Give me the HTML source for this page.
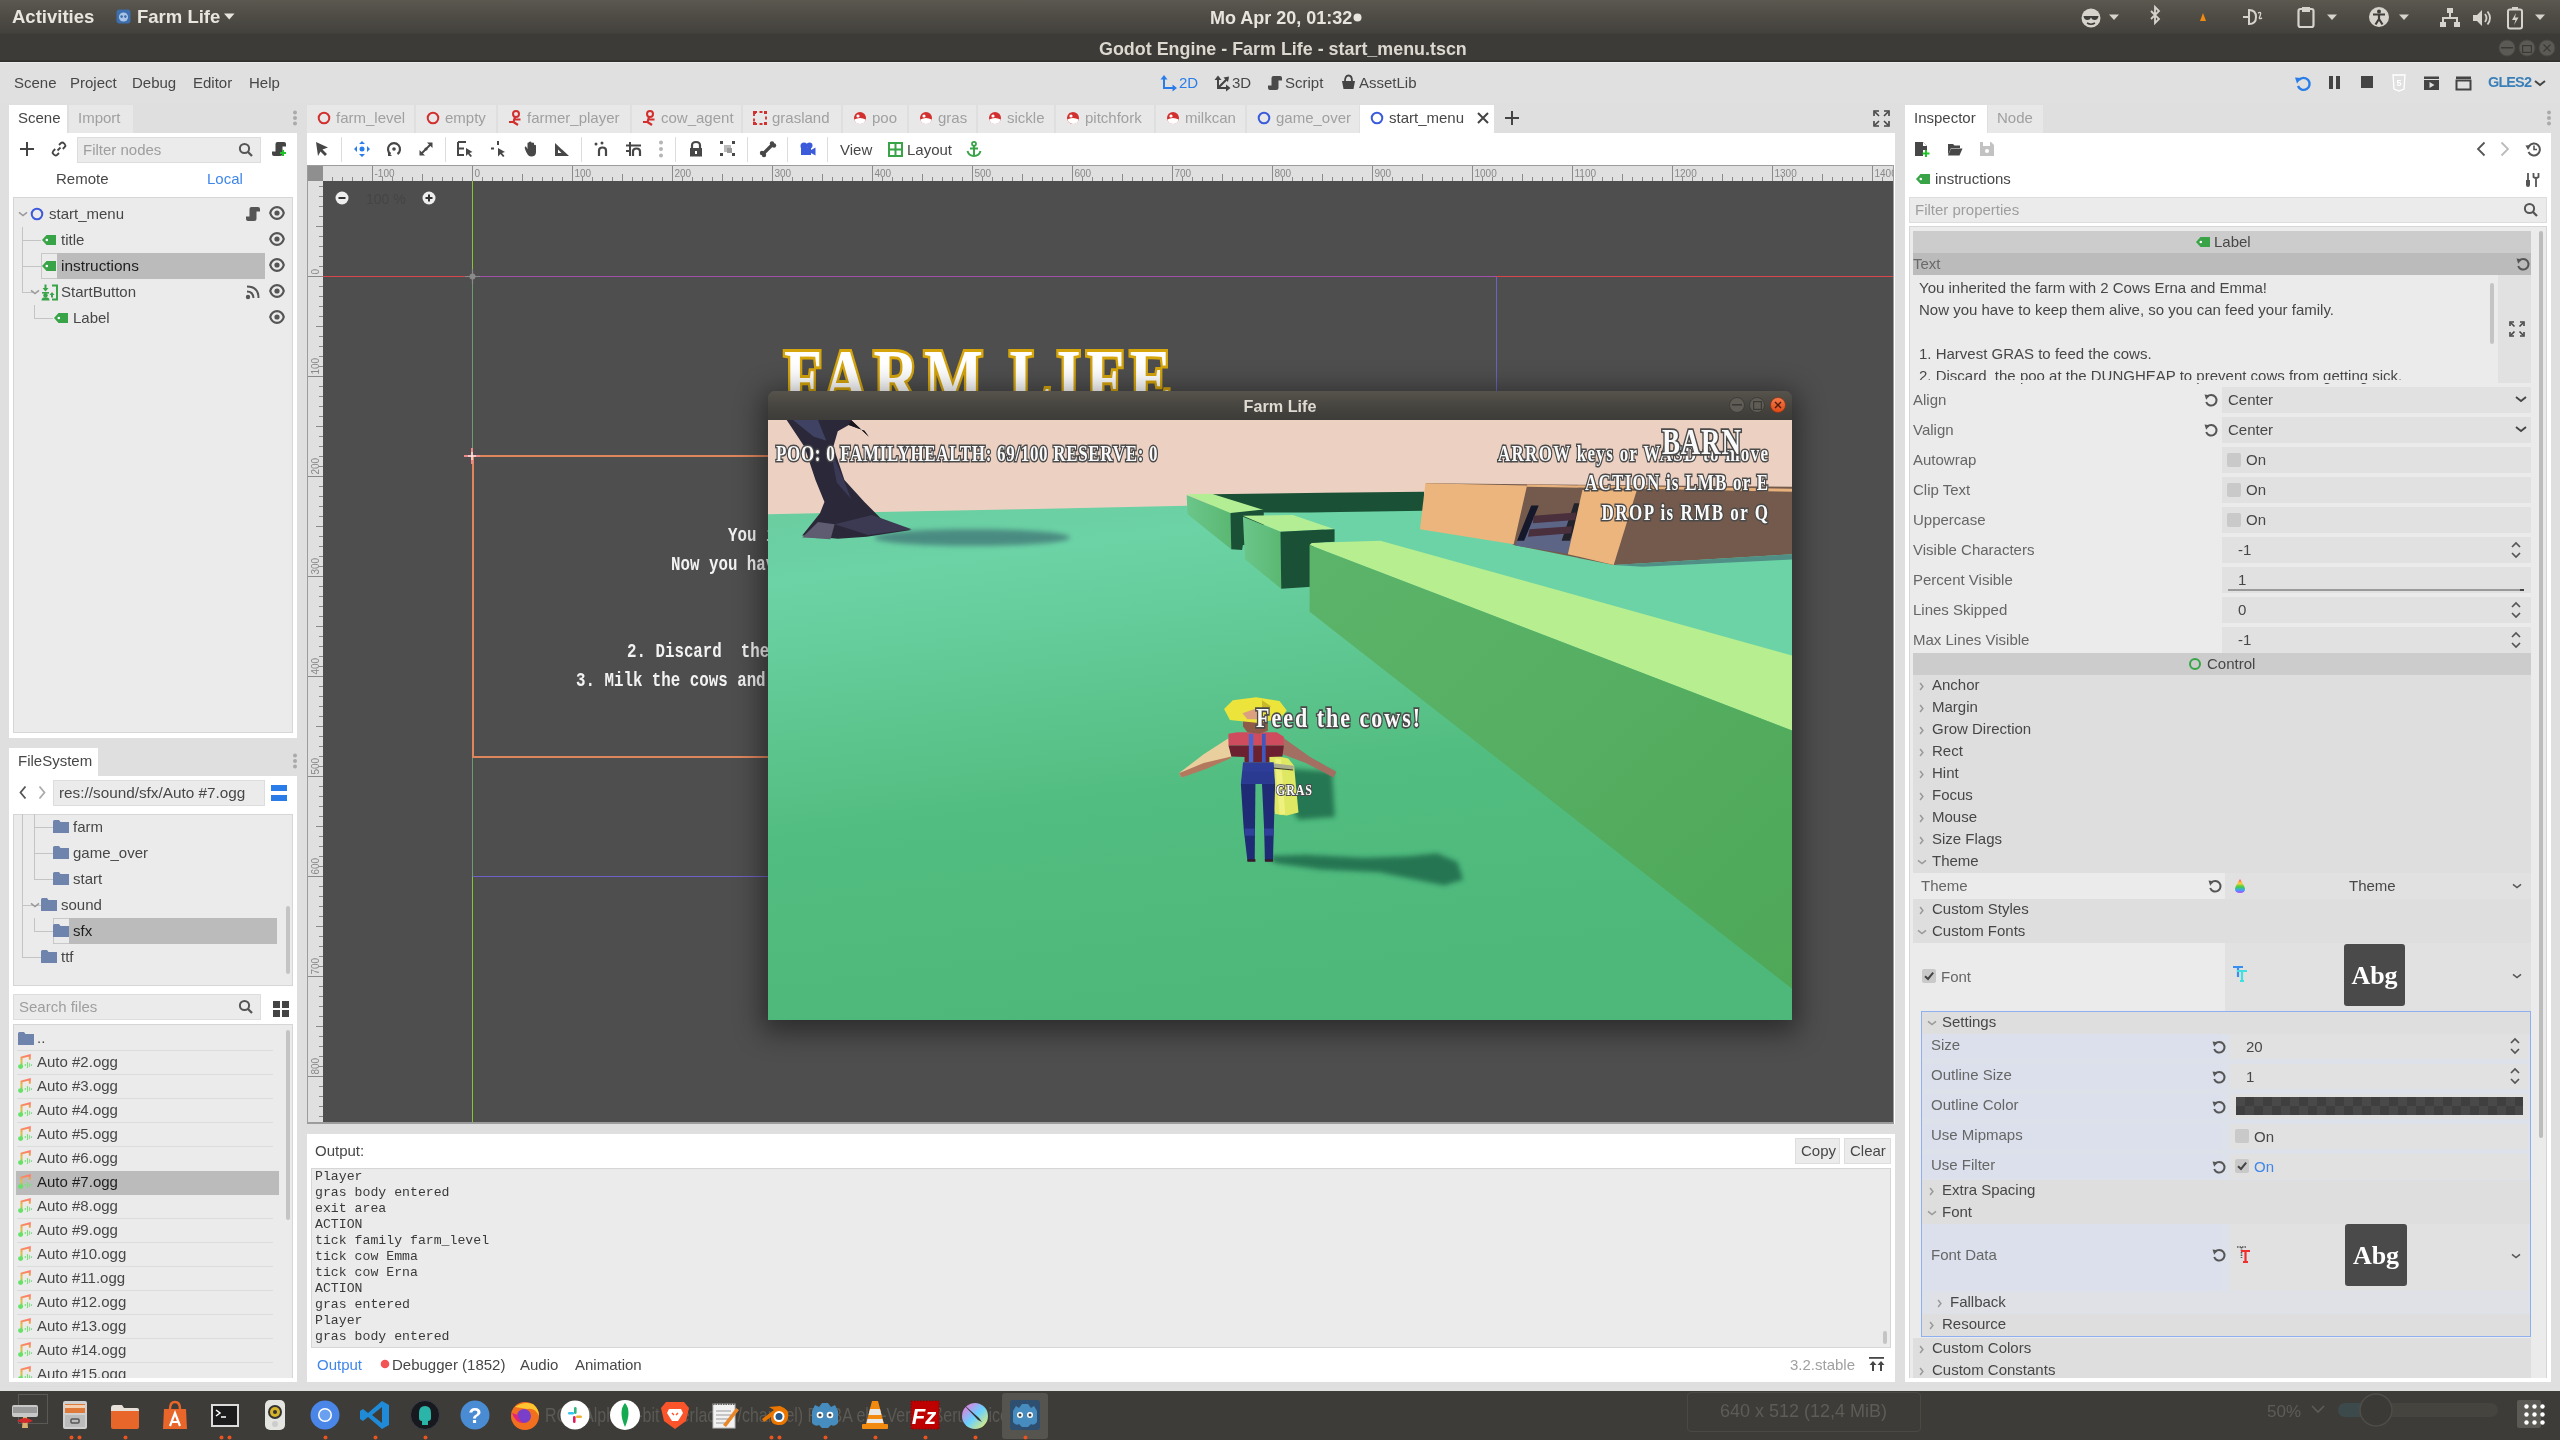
<!DOCTYPE html>
<html><head><meta charset="utf-8">
<style>
*{box-sizing:border-box;margin:0;padding:0}
html,body{width:2560px;height:1440px;overflow:hidden;background:#dfdfdf;font-family:"Liberation Sans",sans-serif;color:#444}
.a{position:absolute}
.t{position:absolute;white-space:pre;line-height:1}
svg{position:absolute;overflow:visible}
</style></head><body>
<div style="position:absolute;left:0;top:0;width:2560px;height:1440px;will-change:transform">

<div class="a" style="left:0;top:0;width:2560px;height:62px;background:linear-gradient(#5b5850 0px,#4f4c46 16px,#44423d 33px,#3c3b37 34px,#3c3b37 60px,#2f2e2b 61px,#2f2e2b 62px)"></div>
<div class="t" style="left:12px;top:8.1px;font-size:18.5px;color:#e8e5df;font-weight:700;">Activities</div>
<svg style="left:116px;top:9px;" width="15" height="15" viewBox="0 0 15 15"><rect x="0.5" y="0.5" width="14" height="14" rx="3" fill="#3d6fae"/><circle cx="7.5" cy="8" r="4.6" fill="#a9c4e6"/><circle cx="5.6" cy="7.6" r="1.3" fill="#3d6fae"/><circle cx="9.4" cy="7.6" r="1.3" fill="#3d6fae"/></svg>
<div class="t" style="left:137px;top:8.1px;font-size:18.5px;color:#e8e5df;font-weight:700;">Farm Life</div>
<svg style="left:224px;top:13px;" width="12" height="8" viewBox="0 0 12 8"><path d="M0 0.5h10.5l-5.25 6z" fill="#e8e5df"/></svg>
<div class="t" style="left:1210px;top:8.6px;font-size:18px;color:#e8e5df;font-weight:700;">Mo Apr 20, 01:32</div>
<svg style="left:1353px;top:13px;" width="9" height="9" viewBox="0 0 9 9"><circle cx="4.5" cy="4.5" r="4" fill="#e8e5df"/></svg>
<div class="t" style="left:1099px;top:40.6px;font-size:17.9px;color:#dcd8d0;font-weight:700;">Godot Engine - Farm Life - start_menu.tscn</div>
<svg style="left:2080px;top:7px;" width="22" height="22" viewBox="0 0 22 22"><circle cx="11" cy="11" r="9.5" fill="#d6d3cc"/><path d="M3.5 9 H18.5 Q18 13 14.5 13 Q12 13 11 10.5 Q10 13 7.5 13 Q4 13 3.5 9Z" fill="#3f3d39"/><path d="M7 16 Q11 18.5 15 16" stroke="#3f3d39" stroke-width="1.5" fill="none"/></svg>
<svg style="left:2109px;top:14px;" width="12" height="8" viewBox="0 0 12 8"><path d="M0 0.5h10l-5 5.5z" fill="#d6d3cc"/></svg>
<svg style="left:2146px;top:6px;" width="18" height="22" viewBox="0 0 18 22"><path d="M5 5 L13 13 L9 17 V1 L13 5 L5 13" fill="none" stroke="#d6d3cc" stroke-width="1.8"/></svg>
<svg style="left:2199px;top:13px;" width="8" height="8" viewBox="0 0 8 8"><path d="M4 0 L7 8 H1Z" fill="#f08a10"/></svg>
<svg style="left:2241px;top:7px;" width="22" height="20" viewBox="0 0 22 20"><path d="M2 10h5M8 3 Q15 3 15 10 Q15 17 8 17Z" fill="none" stroke="#d6d3cc" stroke-width="2"/><path d="M17 6 Q21 4 19 9 Q17 13 21 11" fill="none" stroke="#d6d3cc" stroke-width="1.4"/></svg>
<svg style="left:2297px;top:6px;" width="18" height="22" viewBox="0 0 18 22"><rect x="1.5" y="3" width="15" height="18" rx="2" fill="none" stroke="#d6d3cc" stroke-width="2.2"/><rect x="5" y="1" width="8" height="5" fill="#d6d3cc"/></svg>
<svg style="left:2327px;top:14px;" width="12" height="8" viewBox="0 0 12 8"><path d="M0 0.5h10l-5 5.5z" fill="#d6d3cc"/></svg>
<svg style="left:2368px;top:6px;" width="22" height="22" viewBox="0 0 22 22"><circle cx="11" cy="11" r="10" fill="#d6d3cc"/><circle cx="11" cy="5.5" r="2" fill="#3f3d39"/><path d="M5 8.5 H17 M11 8.5 V13 L7.5 18.5 M11 13 L14.5 18.5" stroke="#3f3d39" stroke-width="2.2" fill="none"/></svg>
<svg style="left:2399px;top:14px;" width="12" height="8" viewBox="0 0 12 8"><path d="M0 0.5h10l-5 5.5z" fill="#d6d3cc"/></svg>
<svg style="left:2440px;top:7px;" width="20" height="21" viewBox="0 0 20 21"><rect x="7" y="1" width="6" height="5" fill="#d6d3cc"/><rect x="0" y="15" width="6" height="5" fill="#d6d3cc"/><rect x="14" y="15" width="6" height="5" fill="#d6d3cc"/><path d="M10 6v5M3 15v-4h14v4" fill="none" stroke="#d6d3cc" stroke-width="2"/></svg>
<svg style="left:2472px;top:8px;" width="22" height="20" viewBox="0 0 22 20"><path d="M1 7h4l5-5v16l-5-5H1Z" fill="#d6d3cc"/><path d="M13 6 Q16 10 13 14M15.5 3.5 Q20.5 10 15.5 16.5" fill="none" stroke="#d6d3cc" stroke-width="1.8"/></svg>
<svg style="left:2506px;top:6px;" width="18" height="23" viewBox="0 0 18 23"><rect x="2" y="3.5" width="14" height="19" rx="2" fill="none" stroke="#d6d3cc" stroke-width="2"/><rect x="6" y="1" width="6" height="3" fill="#d6d3cc"/><path d="M10 7 L6 14 H9.5 L8 19 L12.5 11.5 H9Z" fill="#d6d3cc"/></svg>
<svg style="left:2535px;top:14px;" width="12" height="8" viewBox="0 0 12 8"><path d="M0 0.5h10l-5 5.5z" fill="#d6d3cc"/></svg>
<svg style="left:2498px;top:39px;" width="18" height="18" viewBox="0 0 18 18"><circle cx="9" cy="9" r="8" fill="#5c5a55" stroke="#4a4843" stroke-width="1"/></svg>
<svg style="left:2518px;top:39px;" width="18" height="18" viewBox="0 0 18 18"><circle cx="9" cy="9" r="8" fill="#5c5a55" stroke="#4a4843" stroke-width="1"/></svg>
<svg style="left:2538px;top:39px;" width="18" height="18" viewBox="0 0 18 18"><circle cx="9" cy="9" r="8" fill="#5c5a55" stroke="#4a4843" stroke-width="1"/></svg>
<svg style="left:2501px;top:47px;" width="12" height="3" viewBox="0 0 12 3"><rect x="0" y="0" width="12" height="1.5" fill="#3a3935"/></svg>
<svg style="left:2522px;top:44.5px;" width="10" height="8" viewBox="0 0 10 8"><rect x="0.6" y="0.6" width="8.8" height="6.8" fill="none" stroke="#3a3935" stroke-width="1.2"/></svg>
<svg style="left:2543px;top:44px;" width="8" height="8" viewBox="0 0 8 8"><path d="M0.5 0.5 L7.5 7.5 M7.5 0.5 L0.5 7.5" stroke="#3a3935" stroke-width="1.1"/></svg>
<div class="a" style="left:0px;top:62px;width:2560px;height:41px;background:#e0e0e0;"></div>
<div class="a" style="left:0px;top:62px;width:2560px;height:1px;background:#ebebeb;"></div>
<div class="t" style="left:14px;top:74.6px;font-size:15px;color:#474747;">Scene</div>
<div class="t" style="left:70px;top:74.6px;font-size:15px;color:#474747;">Project</div>
<div class="t" style="left:132px;top:74.6px;font-size:15px;color:#474747;">Debug</div>
<div class="t" style="left:193px;top:74.6px;font-size:15px;color:#474747;">Editor</div>
<div class="t" style="left:249px;top:74.6px;font-size:15px;color:#474747;">Help</div>
<svg style="left:1160px;top:74px;" width="18" height="18" viewBox="0 0 18 18"><path d="M4 3 V14 H15" fill="none" stroke="#2a7de8" stroke-width="2"/><path d="M0.5 5.5 L4 1 L7.5 5.5Z M12.5 10.5 L17 14 L12.5 17.5Z" fill="#2a7de8"/></svg>
<div class="t" style="left:1179px;top:74.6px;font-size:15px;color:#2a7de8;">2D</div>
<svg style="left:1214px;top:74px;" width="18" height="18" viewBox="0 0 18 18"><path d="M4 4 V14 H14 M4 14 L14 4" fill="none" stroke="#444" stroke-width="2"/><path d="M0.5 6 L4 1.5 L7.5 6Z M12 10.5 L16.5 14 L12 17.5Z M9.5 3.5 L15 2.5 L14 8Z" fill="#444"/></svg>
<div class="t" style="left:1232px;top:74.6px;font-size:15px;color:#474747;">3D</div>
<svg style="left:1267px;top:75px;" width="16" height="16" viewBox="0 0 16 16"><path d="M6.5 1 H13 Q15 1 15 3 V5.5 H11.5 V12.5 Q11.5 15 9 15 H3 Q1 15 1 13 V10.5 H4.5 V3 Q4.5 1 6.5 1Z" fill="#4a4a4a"/></svg>
<div class="t" style="left:1285px;top:74.6px;font-size:15px;color:#474747;">Script</div>
<svg style="left:1341px;top:74px;" width="15" height="16" viewBox="0 0 15 16"><path d="M1 7 H14 L12.5 15 H2.5Z" fill="#444"/><path d="M4 7 Q4 1.5 7.5 1.5 Q11 1.5 11 7" fill="none" stroke="#444" stroke-width="1.8"/></svg>
<div class="t" style="left:1359px;top:74.6px;font-size:15px;color:#474747;">AssetLib</div>
<svg style="left:2294px;top:74px;" width="18" height="18" viewBox="0 0 18 18"><path d="M5 6 A6 6 0 1 1 4 12" fill="none" stroke="#2a7de8" stroke-width="2.4"/><path d="M1 3.5 L7.5 4 L3 9.5Z" fill="#2a7de8"/></svg>
<svg style="left:2328px;top:75px;" width="14" height="15" viewBox="0 0 14 15"><rect x="1" y="1" width="4" height="13" fill="#444"/><rect x="8" y="1" width="4" height="13" fill="#444"/></svg>
<svg style="left:2360px;top:75px;" width="14" height="15" viewBox="0 0 14 15"><rect x="1" y="1" width="12" height="12" fill="#444"/></svg>
<svg style="left:2392px;top:74px;" width="14" height="18" viewBox="0 0 14 18"><path d="M1 1 H13 L12 15 L7 17 L2 15Z" fill="none" stroke="#fff" stroke-width="1.3"/><text x="7" y="12" font-size="9" text-anchor="middle" fill="#fff" font-family="Liberation Sans" font-weight="700">5</text></svg>
<svg style="left:2423px;top:75px;" width="17" height="16" viewBox="0 0 17 16"><rect x="1" y="5" width="15" height="10" fill="#444"/><path d="M1 1.5 H16 V4 H1Z" fill="#444"/><path d="M6.5 7 L11.5 10 L6.5 13Z" fill="#e0e0e0"/></svg>
<svg style="left:2455px;top:75px;" width="17" height="16" viewBox="0 0 17 16"><rect x="1.5" y="5.5" width="14" height="9" fill="none" stroke="#444" stroke-width="2"/><path d="M1 1.5 H16 V4 H1Z" fill="#444"/></svg>
<div class="t" style="left:2488px;top:75.0px;font-size:14.5px;color:#3a7fb8;font-weight:700;letter-spacing:-0.9px">GLES2</div>
<svg style="left:2534px;top:78px;" width="12" height="10" viewBox="0 0 12 10"><path d="M1 3.0 L6 7.0 L11 3.0" fill="none" stroke="#444" stroke-width="2"/></svg>
<svg width="0" height="0" style="position:absolute"><defs><linearGradient id="mg" x1="0" y1="0" x2="0" y2="1" gradientUnits="objectBoundingBox"><stop offset="0" stop-color="#ff7a6a"/><stop offset="0.55" stop-color="#e0c040"/><stop offset="1" stop-color="#66e066"/></linearGradient></defs></svg>
<div class="a" style="left:9px;top:105px;width:58px;height:28px;background:#ffffff;"></div>
<div class="t" style="left:18px;top:110.1px;font-size:15px;color:#474747;">Scene</div>
<div class="a" style="left:69px;top:105px;width:64px;height:28px;background:#e8e8e8;"></div>
<div class="t" style="left:78px;top:110.1px;font-size:15px;color:#a0a0a0;">Import</div>
<svg style="left:291px;top:110px;" width="8" height="18" viewBox="0 0 8 18"><circle cx="4" cy="2.5" r="2" fill="#aaa"/><circle cx="4" cy="8" r="2" fill="#aaa"/><circle cx="4" cy="13.5" r="2" fill="#aaa"/></svg>
<div class="a" style="left:9px;top:133px;width:288px;height:605px;background:#ffffff;"></div>
<svg style="left:19px;top:141px;" width="16" height="16" viewBox="0 0 16 16"><path d="M8 1 V15 M1 8 H15" stroke="#444" stroke-width="2"/></svg>
<svg style="left:51px;top:141px;" width="16" height="16" viewBox="0 0 16 16"><path d="M6.5 9.5 L9.5 6.5" stroke="#444" stroke-width="1.8"/><path d="M8 4 L10 2 Q11.5 0.8 13 2.3 L13.7 3 Q15 4.5 13.8 6 L11.8 8 M8 12 L6 14 Q4.5 15.2 3 13.7 L2.3 13 Q1 11.5 2.2 10 L4.2 8" fill="none" stroke="#444" stroke-width="1.8"/></svg>
<div class="a" style="left:77px;top:137px;width:184px;height:26px;background:#ebebeb;border:1px solid #dddddd"></div>
<div class="t" style="left:83px;top:141.6px;font-size:15px;color:#9e9e9e;">Filter nodes</div>
<svg style="left:238px;top:142px;" width="16" height="16" viewBox="0 0 16 16"><circle cx="6.5" cy="6.5" r="4.6" fill="none" stroke="#555" stroke-width="2"/><path d="M10 10 L14 14" stroke="#555" stroke-width="2.3"/></svg>
<svg style="left:271px;top:141px;" width="16" height="16" viewBox="0 0 16 16"><path d="M6.5 1 H13 Q15 1 15 3 V5.5 H11.5 V12.5 Q11.5 15 9 15 H3 Q1 15 1 13 V10.5 H4.5 V3 Q4.5 1 6.5 1Z" fill="#444"/><path d="M12 9 V15 M9 12 H15" stroke="#22c32a" stroke-width="2"/></svg>
<div class="t" style="left:56px;top:171.1px;font-size:15px;color:#474747;">Remote</div>
<div class="t" style="left:207px;top:171.1px;font-size:15px;color:#3f86ea;">Local</div>
<div class="a" style="left:13px;top:197px;width:280px;height:536px;background:#ebebeb;border:1px solid #d6d6d6"></div>
<div class="a" style="left:41px;top:253px;width:224px;height:26px;background:#bbbbbb;"></div>
<div class="a" style="left:41px;top:253px;width:16px;height:26px;background:#ebebeb;border:1px solid #c8c8c8;border-right:none"></div>
<div class="a" style="left:22px;top:227px;width:1px;height:66px;background:#c4c4c4;"></div>
<div class="a" style="left:22px;top:240px;width:19px;height:1px;background:#c4c4c4;"></div>
<div class="a" style="left:22px;top:266px;width:19px;height:1px;background:#c4c4c4;"></div>
<div class="a" style="left:22px;top:292px;width:11px;height:1px;background:#c4c4c4;"></div>
<div class="a" style="left:34px;top:305px;width:1px;height:13px;background:#c4c4c4;"></div>
<div class="a" style="left:34px;top:318px;width:19px;height:1px;background:#c4c4c4;"></div>
<svg style="left:18px;top:210px;" width="10" height="8" viewBox="0 0 10 8"><path d="M1 2.4 L5 5.6 L9 2.4" fill="none" stroke="#999" stroke-width="1.5"/></svg>
<svg style="left:29px;top:206px;" width="16" height="16" viewBox="0 0 16 16"><circle cx="8" cy="8" r="5.3" fill="none" stroke="#3b5bdb" stroke-width="2"/></svg>
<div class="t" style="left:49px;top:206.1px;font-size:15px;color:#474747;">start_menu</div>
<svg style="left:245px;top:206px;" width="16" height="16" viewBox="0 0 16 16"><path d="M6.5 1 H13 Q15 1 15 3 V5.5 H11.5 V12.5 Q11.5 15 9 15 H3 Q1 15 1 13 V10.5 H4.5 V3 Q4.5 1 6.5 1Z" fill="#555"/></svg>
<svg style="left:269px;top:206px;" width="16" height="14" viewBox="0 0 16 14"><path d="M1.2 7 Q3 1.2 8 1.2 Q13 1.2 14.8 7 Q13 12.8 8 12.8 Q3 12.8 1.2 7Z" fill="none" stroke="#555" stroke-width="2.2"/><circle cx="8" cy="7" r="2.6" fill="#555"/></svg>
<svg style="left:42px;top:235px;" width="14" height="10" viewBox="0 0 14 10"><path d="M0 5 L4.5 0 H14 V10 H4.5Z" fill="#38a347"/><circle cx="4.8" cy="5" r="1.3" fill="#fff"/></svg>
<div class="t" style="left:61px;top:232.1px;font-size:15px;color:#474747;">title</div>
<svg style="left:269px;top:232px;" width="16" height="14" viewBox="0 0 16 14"><path d="M1.2 7 Q3 1.2 8 1.2 Q13 1.2 14.8 7 Q13 12.8 8 12.8 Q3 12.8 1.2 7Z" fill="none" stroke="#555" stroke-width="2.2"/><circle cx="8" cy="7" r="2.6" fill="#555"/></svg>
<svg style="left:42px;top:261px;" width="14" height="10" viewBox="0 0 14 10"><path d="M0 5 L4.5 0 H14 V10 H4.5Z" fill="#38a347"/><circle cx="4.8" cy="5" r="1.3" fill="#fff"/></svg>
<div class="t" style="left:61px;top:257.8px;font-size:15.4px;color:#1e1e1e;">instructions</div>
<svg style="left:269px;top:258px;" width="16" height="14" viewBox="0 0 16 14"><path d="M1.2 7 Q3 1.2 8 1.2 Q13 1.2 14.8 7 Q13 12.8 8 12.8 Q3 12.8 1.2 7Z" fill="none" stroke="#555" stroke-width="2.2"/><circle cx="8" cy="7" r="2.6" fill="#555"/></svg>
<svg style="left:30px;top:288px;" width="10" height="8" viewBox="0 0 10 8"><path d="M1 2.4 L5 5.6 L9 2.4" fill="none" stroke="#999" stroke-width="1.5"/></svg>
<svg style="left:41px;top:284px;" width="17" height="17" viewBox="0 0 17 17"><path d="M11 1.5 H16 V15.5 H11" fill="none" stroke="#38a347" stroke-width="2"/><path d="M4.5 0.5 V5" stroke="#38a347" stroke-width="2"/><path d="M1.5 4 H7.5 L4.5 7.5Z" fill="#38a347"/><rect x="1" y="8" width="7" height="1.6" fill="#38a347"/><circle cx="4.5" cy="11.3" r="2.2" fill="#38a347"/><path d="M0.5 16.5 Q0.5 13.2 4.5 13.2 Q8.5 13.2 8.5 16.5Z" fill="#38a347"/><path d="M8.5 11 L11 8 L13.5 11Z" fill="#38a347"/><rect x="10" y="11" width="2" height="2.5" fill="#38a347"/></svg>
<div class="t" style="left:61px;top:284.1px;font-size:15px;color:#474747;">StartButton</div>
<svg style="left:245px;top:284px;" width="16" height="16" viewBox="0 0 16 16"><circle cx="3" cy="13" r="2.2" fill="#555"/><path d="M2 7.5 Q8 7.5 8.5 14 M2 2.5 Q13.5 2.5 13.5 14" fill="none" stroke="#555" stroke-width="2"/></svg>
<svg style="left:269px;top:284px;" width="16" height="14" viewBox="0 0 16 14"><path d="M1.2 7 Q3 1.2 8 1.2 Q13 1.2 14.8 7 Q13 12.8 8 12.8 Q3 12.8 1.2 7Z" fill="none" stroke="#555" stroke-width="2.2"/><circle cx="8" cy="7" r="2.6" fill="#555"/></svg>
<svg style="left:54px;top:313px;" width="14" height="10" viewBox="0 0 14 10"><path d="M0 5 L4.5 0 H14 V10 H4.5Z" fill="#38a347"/><circle cx="4.8" cy="5" r="1.3" fill="#fff"/></svg>
<div class="t" style="left:73px;top:310.1px;font-size:15px;color:#474747;">Label</div>
<svg style="left:269px;top:310px;" width="16" height="14" viewBox="0 0 16 14"><path d="M1.2 7 Q3 1.2 8 1.2 Q13 1.2 14.8 7 Q13 12.8 8 12.8 Q3 12.8 1.2 7Z" fill="none" stroke="#555" stroke-width="2.2"/><circle cx="8" cy="7" r="2.6" fill="#555"/></svg>
<div class="a" style="left:9px;top:748px;width:89px;height:28px;background:#ffffff;"></div>
<div class="t" style="left:18px;top:753.1px;font-size:15px;color:#474747;">FileSystem</div>
<svg style="left:291px;top:753px;" width="8" height="18" viewBox="0 0 8 18"><circle cx="4" cy="2.5" r="2" fill="#aaa"/><circle cx="4" cy="8" r="2" fill="#aaa"/><circle cx="4" cy="13.5" r="2" fill="#aaa"/></svg>
<div class="a" style="left:9px;top:776px;width:288px;height:606px;background:#ffffff;"></div>
<svg style="left:18px;top:785px;" width="10" height="15" viewBox="0 0 10 15"><path d="M7.5 1.5 L2.5 7.5 L7.5 13.5" fill="none" stroke="#555" stroke-width="1.8"/></svg>
<svg style="left:37px;top:785px;" width="10" height="15" viewBox="0 0 10 15"><path d="M2.5 1.5 L7.5 7.5 L2.5 13.5" fill="none" stroke="#aaa" stroke-width="1.8"/></svg>
<div class="a" style="left:53px;top:780px;width:212px;height:26px;background:#ebebeb;border:1px solid #dddddd"></div>
<div class="t" style="left:59px;top:784.8px;font-size:15.3px;color:#474747;">res://sound/sfx/Auto #7.ogg</div>
<div class="a" style="left:271px;top:785px;width:16px;height:6px;background:#2a7de8;"></div>
<div class="a" style="left:271px;top:795px;width:16px;height:6px;background:#2a7de8;"></div>
<div class="a" style="left:13px;top:814px;width:280px;height:172px;background:#ebebeb;border:1px solid #d6d6d6"></div>
<div class="a" style="left:53px;top:918px;width:224px;height:26px;background:#bbbbbb;"></div>
<div class="a" style="left:53px;top:918px;width:16px;height:26px;background:#ebebeb;border:1px solid #c8c8c8;border-right:none"></div>
<div class="a" style="left:22px;top:814px;width:1px;height:143px;background:#c4c4c4;"></div>
<div class="a" style="left:22px;top:905px;width:19px;height:1px;background:#c4c4c4;"></div>
<div class="a" style="left:22px;top:957px;width:19px;height:1px;background:#c4c4c4;"></div>
<div class="a" style="left:34px;top:814px;width:1px;height:65px;background:#c4c4c4;"></div>
<div class="a" style="left:34px;top:827px;width:19px;height:1px;background:#c4c4c4;"></div>
<div class="a" style="left:34px;top:853px;width:19px;height:1px;background:#c4c4c4;"></div>
<div class="a" style="left:34px;top:879px;width:19px;height:1px;background:#c4c4c4;"></div>
<div class="a" style="left:34px;top:918px;width:1px;height:13px;background:#c4c4c4;"></div>
<div class="a" style="left:34px;top:931px;width:19px;height:1px;background:#c4c4c4;"></div>
<svg style="left:53px;top:820px;" width="16" height="13" viewBox="0 0 16 13"><path d="M0 1.5 Q0 0 1.5 0 H6 L7.5 2 H16 V13 H0Z" fill="#6f84ad"/></svg>
<div class="t" style="left:73px;top:819.1px;font-size:15px;color:#474747;">farm</div>
<svg style="left:53px;top:846px;" width="16" height="13" viewBox="0 0 16 13"><path d="M0 1.5 Q0 0 1.5 0 H6 L7.5 2 H16 V13 H0Z" fill="#6f84ad"/></svg>
<div class="t" style="left:73px;top:845.1px;font-size:15px;color:#474747;">game_over</div>
<svg style="left:53px;top:872px;" width="16" height="13" viewBox="0 0 16 13"><path d="M0 1.5 Q0 0 1.5 0 H6 L7.5 2 H16 V13 H0Z" fill="#6f84ad"/></svg>
<div class="t" style="left:73px;top:871.1px;font-size:15px;color:#474747;">start</div>
<svg style="left:41px;top:898px;" width="16" height="13" viewBox="0 0 16 13"><path d="M0 1.5 Q0 0 1.5 0 H6 L7.5 2 H16 V13 H0Z" fill="#6f84ad"/></svg>
<div class="t" style="left:61px;top:897.1px;font-size:15px;color:#474747;">sound</div>
<svg style="left:53px;top:924px;" width="16" height="13" viewBox="0 0 16 13"><path d="M0 1.5 Q0 0 1.5 0 H6 L7.5 2 H16 V13 H0Z" fill="#6f84ad"/></svg>
<div class="t" style="left:73px;top:923.1px;font-size:15px;color:#1e1e1e;">sfx</div>
<svg style="left:41px;top:950px;" width="16" height="13" viewBox="0 0 16 13"><path d="M0 1.5 Q0 0 1.5 0 H6 L7.5 2 H16 V13 H0Z" fill="#6f84ad"/></svg>
<div class="t" style="left:61px;top:949.1px;font-size:15px;color:#474747;">ttf</div>
<svg style="left:30px;top:901px;" width="10" height="8" viewBox="0 0 10 8"><path d="M1 2.4 L5 5.6 L9 2.4" fill="none" stroke="#999" stroke-width="1.5"/></svg>
<div class="a" style="left:286px;top:906px;width:4px;height:68px;background:#c4c4c4;border-radius:2px"></div>
<div class="a" style="left:13px;top:994px;width:248px;height:26px;background:#ebebeb;border:1px solid #dddddd"></div>
<div class="t" style="left:19px;top:998.6px;font-size:15px;color:#9e9e9e;">Search files</div>
<svg style="left:238px;top:999px;" width="16" height="16" viewBox="0 0 16 16"><circle cx="6.5" cy="6.5" r="4.6" fill="none" stroke="#555" stroke-width="2"/><path d="M10 10 L14 14" stroke="#555" stroke-width="2.3"/></svg>
<div class="a" style="left:273px;top:1001px;width:7px;height:7px;background:#444;"></div>
<div class="a" style="left:282px;top:1001px;width:7px;height:7px;background:#444;"></div>
<div class="a" style="left:273px;top:1010px;width:7px;height:7px;background:#444;"></div>
<div class="a" style="left:282px;top:1010px;width:7px;height:7px;background:#444;"></div>
<div class="a" style="left:13px;top:1024px;width:280px;height:358px;background:#ebebeb;border:1px solid #d6d6d6"></div>
<div class="a" style="left:16px;top:1171px;width:263px;height:24px;background:#bbbbbb;"></div>
<svg style="left:18px;top:1032px;" width="16" height="13" viewBox="0 0 16 13"><path d="M0 1.5 Q0 0 1.5 0 H6 L7.5 2 H16 V13 H0Z" fill="#6f84ad"/></svg>
<div class="t" style="left:37px;top:1029.6px;font-size:15px;color:#474747;">..</div>
<div class="a" style="left:17px;top:1074px;width:256px;height:1px;background:#dcdcdc;"></div>
<div class="a" style="left:17px;top:1050px;width:256px;height:1px;background:#dcdcdc;"></div>
<svg style="left:18px;top:1054px;" width="16" height="16" viewBox="0 0 16 16"><path d="M3.5 12 V3.6 L11.8 1.3 V5.8" fill="none" stroke="url(#mg)" stroke-width="2"/><ellipse cx="2.6" cy="12.6" rx="2.5" ry="2.3" fill="#66e066"/><path d="M7.3 10v2M9.5 8v6M11.5 9.3v3.4M13.5 10.3v1.6" stroke="#7be07b" stroke-width="1.1"/></svg>
<div class="t" style="left:37px;top:1054.1px;font-size:15px;color:#474747;">Auto #2.ogg</div>
<div class="a" style="left:17px;top:1098px;width:256px;height:1px;background:#dcdcdc;"></div>
<svg style="left:18px;top:1078px;" width="16" height="16" viewBox="0 0 16 16"><path d="M3.5 12 V3.6 L11.8 1.3 V5.8" fill="none" stroke="url(#mg)" stroke-width="2"/><ellipse cx="2.6" cy="12.6" rx="2.5" ry="2.3" fill="#66e066"/><path d="M7.3 10v2M9.5 8v6M11.5 9.3v3.4M13.5 10.3v1.6" stroke="#7be07b" stroke-width="1.1"/></svg>
<div class="t" style="left:37px;top:1078.1px;font-size:15px;color:#474747;">Auto #3.ogg</div>
<div class="a" style="left:17px;top:1122px;width:256px;height:1px;background:#dcdcdc;"></div>
<svg style="left:18px;top:1102px;" width="16" height="16" viewBox="0 0 16 16"><path d="M3.5 12 V3.6 L11.8 1.3 V5.8" fill="none" stroke="url(#mg)" stroke-width="2"/><ellipse cx="2.6" cy="12.6" rx="2.5" ry="2.3" fill="#66e066"/><path d="M7.3 10v2M9.5 8v6M11.5 9.3v3.4M13.5 10.3v1.6" stroke="#7be07b" stroke-width="1.1"/></svg>
<div class="t" style="left:37px;top:1102.1px;font-size:15px;color:#474747;">Auto #4.ogg</div>
<div class="a" style="left:17px;top:1146px;width:256px;height:1px;background:#dcdcdc;"></div>
<svg style="left:18px;top:1126px;" width="16" height="16" viewBox="0 0 16 16"><path d="M3.5 12 V3.6 L11.8 1.3 V5.8" fill="none" stroke="url(#mg)" stroke-width="2"/><ellipse cx="2.6" cy="12.6" rx="2.5" ry="2.3" fill="#66e066"/><path d="M7.3 10v2M9.5 8v6M11.5 9.3v3.4M13.5 10.3v1.6" stroke="#7be07b" stroke-width="1.1"/></svg>
<div class="t" style="left:37px;top:1126.1px;font-size:15px;color:#474747;">Auto #5.ogg</div>
<svg style="left:18px;top:1150px;" width="16" height="16" viewBox="0 0 16 16"><path d="M3.5 12 V3.6 L11.8 1.3 V5.8" fill="none" stroke="url(#mg)" stroke-width="2"/><ellipse cx="2.6" cy="12.6" rx="2.5" ry="2.3" fill="#66e066"/><path d="M7.3 10v2M9.5 8v6M11.5 9.3v3.4M13.5 10.3v1.6" stroke="#7be07b" stroke-width="1.1"/></svg>
<div class="t" style="left:37px;top:1150.1px;font-size:15px;color:#474747;">Auto #6.ogg</div>
<svg style="left:18px;top:1174px;" width="16" height="16" viewBox="0 0 16 16"><path d="M3.5 12 V3.6 L11.8 1.3 V5.8" fill="none" stroke="url(#mg)" stroke-width="2"/><ellipse cx="2.6" cy="12.6" rx="2.5" ry="2.3" fill="#66e066"/><path d="M7.3 10v2M9.5 8v6M11.5 9.3v3.4M13.5 10.3v1.6" stroke="#7be07b" stroke-width="1.1"/></svg>
<div class="t" style="left:37px;top:1174.1px;font-size:15px;color:#1e1e1e;">Auto #7.ogg</div>
<div class="a" style="left:17px;top:1218px;width:256px;height:1px;background:#dcdcdc;"></div>
<svg style="left:18px;top:1198px;" width="16" height="16" viewBox="0 0 16 16"><path d="M3.5 12 V3.6 L11.8 1.3 V5.8" fill="none" stroke="url(#mg)" stroke-width="2"/><ellipse cx="2.6" cy="12.6" rx="2.5" ry="2.3" fill="#66e066"/><path d="M7.3 10v2M9.5 8v6M11.5 9.3v3.4M13.5 10.3v1.6" stroke="#7be07b" stroke-width="1.1"/></svg>
<div class="t" style="left:37px;top:1198.1px;font-size:15px;color:#474747;">Auto #8.ogg</div>
<div class="a" style="left:17px;top:1242px;width:256px;height:1px;background:#dcdcdc;"></div>
<svg style="left:18px;top:1222px;" width="16" height="16" viewBox="0 0 16 16"><path d="M3.5 12 V3.6 L11.8 1.3 V5.8" fill="none" stroke="url(#mg)" stroke-width="2"/><ellipse cx="2.6" cy="12.6" rx="2.5" ry="2.3" fill="#66e066"/><path d="M7.3 10v2M9.5 8v6M11.5 9.3v3.4M13.5 10.3v1.6" stroke="#7be07b" stroke-width="1.1"/></svg>
<div class="t" style="left:37px;top:1222.1px;font-size:15px;color:#474747;">Auto #9.ogg</div>
<div class="a" style="left:17px;top:1266px;width:256px;height:1px;background:#dcdcdc;"></div>
<svg style="left:18px;top:1246px;" width="16" height="16" viewBox="0 0 16 16"><path d="M3.5 12 V3.6 L11.8 1.3 V5.8" fill="none" stroke="url(#mg)" stroke-width="2"/><ellipse cx="2.6" cy="12.6" rx="2.5" ry="2.3" fill="#66e066"/><path d="M7.3 10v2M9.5 8v6M11.5 9.3v3.4M13.5 10.3v1.6" stroke="#7be07b" stroke-width="1.1"/></svg>
<div class="t" style="left:37px;top:1246.1px;font-size:15px;color:#474747;">Auto #10.ogg</div>
<div class="a" style="left:17px;top:1290px;width:256px;height:1px;background:#dcdcdc;"></div>
<svg style="left:18px;top:1270px;" width="16" height="16" viewBox="0 0 16 16"><path d="M3.5 12 V3.6 L11.8 1.3 V5.8" fill="none" stroke="url(#mg)" stroke-width="2"/><ellipse cx="2.6" cy="12.6" rx="2.5" ry="2.3" fill="#66e066"/><path d="M7.3 10v2M9.5 8v6M11.5 9.3v3.4M13.5 10.3v1.6" stroke="#7be07b" stroke-width="1.1"/></svg>
<div class="t" style="left:37px;top:1270.1px;font-size:15px;color:#474747;">Auto #11.ogg</div>
<div class="a" style="left:17px;top:1314px;width:256px;height:1px;background:#dcdcdc;"></div>
<svg style="left:18px;top:1294px;" width="16" height="16" viewBox="0 0 16 16"><path d="M3.5 12 V3.6 L11.8 1.3 V5.8" fill="none" stroke="url(#mg)" stroke-width="2"/><ellipse cx="2.6" cy="12.6" rx="2.5" ry="2.3" fill="#66e066"/><path d="M7.3 10v2M9.5 8v6M11.5 9.3v3.4M13.5 10.3v1.6" stroke="#7be07b" stroke-width="1.1"/></svg>
<div class="t" style="left:37px;top:1294.1px;font-size:15px;color:#474747;">Auto #12.ogg</div>
<div class="a" style="left:17px;top:1338px;width:256px;height:1px;background:#dcdcdc;"></div>
<svg style="left:18px;top:1318px;" width="16" height="16" viewBox="0 0 16 16"><path d="M3.5 12 V3.6 L11.8 1.3 V5.8" fill="none" stroke="url(#mg)" stroke-width="2"/><ellipse cx="2.6" cy="12.6" rx="2.5" ry="2.3" fill="#66e066"/><path d="M7.3 10v2M9.5 8v6M11.5 9.3v3.4M13.5 10.3v1.6" stroke="#7be07b" stroke-width="1.1"/></svg>
<div class="t" style="left:37px;top:1318.1px;font-size:15px;color:#474747;">Auto #13.ogg</div>
<div class="a" style="left:17px;top:1362px;width:256px;height:1px;background:#dcdcdc;"></div>
<svg style="left:18px;top:1342px;" width="16" height="16" viewBox="0 0 16 16"><path d="M3.5 12 V3.6 L11.8 1.3 V5.8" fill="none" stroke="url(#mg)" stroke-width="2"/><ellipse cx="2.6" cy="12.6" rx="2.5" ry="2.3" fill="#66e066"/><path d="M7.3 10v2M9.5 8v6M11.5 9.3v3.4M13.5 10.3v1.6" stroke="#7be07b" stroke-width="1.1"/></svg>
<div class="t" style="left:37px;top:1342.1px;font-size:15px;color:#474747;">Auto #14.ogg</div>
<div class="a" style="left:17px;top:1386px;width:256px;height:1px;background:#dcdcdc;"></div>
<svg style="left:18px;top:1366px;" width="16" height="16" viewBox="0 0 16 16"><path d="M3.5 12 V3.6 L11.8 1.3 V5.8" fill="none" stroke="url(#mg)" stroke-width="2"/><ellipse cx="2.6" cy="12.6" rx="2.5" ry="2.3" fill="#66e066"/><path d="M7.3 10v2M9.5 8v6M11.5 9.3v3.4M13.5 10.3v1.6" stroke="#7be07b" stroke-width="1.1"/></svg>
<div class="t" style="left:37px;top:1366.1px;font-size:15px;color:#474747;">Auto #15.ogg</div>
<div class="a" style="left:286px;top:1030px;width:4px;height:190px;background:#c4c4c4;border-radius:2px"></div>
<div class="a" style="left:13px;top:1378px;width:280px;height:4px;background:#ffffff;"></div>
<!--CENTER-->
<div class="a" style="left:307px;top:105px;width:107px;height:28px;background:#e8e8e8;"></div>
<svg style="left:316px;top:110px;" width="16" height="16" viewBox="0 0 16 16"><circle cx="8" cy="8" r="5.3" fill="none" stroke="#d22f2f" stroke-width="2"/></svg>
<div class="t" style="left:336px;top:110.1px;font-size:15px;color:#a0a0a0;">farm_level</div>
<div class="a" style="left:416px;top:105px;width:80px;height:28px;background:#e8e8e8;"></div>
<svg style="left:425px;top:110px;" width="16" height="16" viewBox="0 0 16 16"><circle cx="8" cy="8" r="5.3" fill="none" stroke="#d22f2f" stroke-width="2"/></svg>
<div class="t" style="left:445px;top:110.1px;font-size:15px;color:#a0a0a0;">empty</div>
<div class="a" style="left:498px;top:105px;width:132px;height:28px;background:#e8e8e8;"></div>
<svg style="left:508px;top:110px;" width="14" height="16" viewBox="0 0 14 16"><circle cx="8" cy="4" r="3" fill="none" stroke="#d22f2f" stroke-width="2"/><path d="M7 7 L5.5 12 H1 M6 9.5 L12.5 9.5 M5.5 12 L10 15" fill="none" stroke="#d22f2f" stroke-width="2.2"/></svg>
<div class="t" style="left:527px;top:110.1px;font-size:15px;color:#a0a0a0;">farmer_player</div>
<div class="a" style="left:632px;top:105px;width:109px;height:28px;background:#e8e8e8;"></div>
<svg style="left:642px;top:110px;" width="14" height="16" viewBox="0 0 14 16"><circle cx="8" cy="4" r="3" fill="none" stroke="#d22f2f" stroke-width="2"/><path d="M7 7 L5.5 12 H1 M6 9.5 L12.5 9.5 M5.5 12 L10 15" fill="none" stroke="#d22f2f" stroke-width="2.2"/></svg>
<div class="t" style="left:661px;top:110.1px;font-size:15px;color:#a0a0a0;">cow_agent</div>
<div class="a" style="left:743px;top:105px;width:98px;height:28px;background:#e8e8e8;"></div>
<svg style="left:753px;top:111px;" width="14" height="14" viewBox="0 0 14 14"><rect x="1" y="1" width="12" height="12" fill="none" stroke="#d22f2f" stroke-width="1.8" stroke-dasharray="3 2.5"/><rect x="0" y="0" width="3" height="3" fill="#d22f2f"/><rect x="11" y="0" width="3" height="3" fill="#d22f2f"/><rect x="0" y="11" width="3" height="3" fill="#d22f2f"/><rect x="11" y="11" width="3" height="3" fill="#d22f2f"/></svg>
<div class="t" style="left:772px;top:110.1px;font-size:15px;color:#a0a0a0;">grasland</div>
<div class="a" style="left:843px;top:105px;width:64px;height:28px;background:#e8e8e8;"></div>
<svg style="left:853px;top:111px;" width="14" height="14" viewBox="0 0 14 14"><circle cx="7" cy="7" r="6" fill="#d22f2f"/><path d="M1.3 8.5 Q7 5.5 12.7 8.5 Q11.5 13 7 13 Q2.5 13 1.3 8.5Z" fill="#fff"/><circle cx="5" cy="5" r="1.6" fill="#fff"/></svg>
<div class="t" style="left:872px;top:110.1px;font-size:15px;color:#a0a0a0;">poo</div>
<div class="a" style="left:909px;top:105px;width:67px;height:28px;background:#e8e8e8;"></div>
<svg style="left:919px;top:111px;" width="14" height="14" viewBox="0 0 14 14"><circle cx="7" cy="7" r="6" fill="#d22f2f"/><path d="M1.3 8.5 Q7 5.5 12.7 8.5 Q11.5 13 7 13 Q2.5 13 1.3 8.5Z" fill="#fff"/><circle cx="5" cy="5" r="1.6" fill="#fff"/></svg>
<div class="t" style="left:938px;top:110.1px;font-size:15px;color:#a0a0a0;">gras</div>
<div class="a" style="left:978px;top:105px;width:76px;height:28px;background:#e8e8e8;"></div>
<svg style="left:988px;top:111px;" width="14" height="14" viewBox="0 0 14 14"><circle cx="7" cy="7" r="6" fill="#d22f2f"/><path d="M1.3 8.5 Q7 5.5 12.7 8.5 Q11.5 13 7 13 Q2.5 13 1.3 8.5Z" fill="#fff"/><circle cx="5" cy="5" r="1.6" fill="#fff"/></svg>
<div class="t" style="left:1007px;top:110.1px;font-size:15px;color:#a0a0a0;">sickle</div>
<div class="a" style="left:1056px;top:105px;width:98px;height:28px;background:#e8e8e8;"></div>
<svg style="left:1066px;top:111px;" width="14" height="14" viewBox="0 0 14 14"><circle cx="7" cy="7" r="6" fill="#d22f2f"/><path d="M1.3 8.5 Q7 5.5 12.7 8.5 Q11.5 13 7 13 Q2.5 13 1.3 8.5Z" fill="#fff"/><circle cx="5" cy="5" r="1.6" fill="#fff"/></svg>
<div class="t" style="left:1085px;top:110.1px;font-size:15px;color:#a0a0a0;">pitchfork</div>
<div class="a" style="left:1156px;top:105px;width:89px;height:28px;background:#e8e8e8;"></div>
<svg style="left:1166px;top:111px;" width="14" height="14" viewBox="0 0 14 14"><circle cx="7" cy="7" r="6" fill="#d22f2f"/><path d="M1.3 8.5 Q7 5.5 12.7 8.5 Q11.5 13 7 13 Q2.5 13 1.3 8.5Z" fill="#fff"/><circle cx="5" cy="5" r="1.6" fill="#fff"/></svg>
<div class="t" style="left:1185px;top:110.1px;font-size:15px;color:#a0a0a0;">milkcan</div>
<div class="a" style="left:1247px;top:105px;width:112px;height:28px;background:#e8e8e8;"></div>
<svg style="left:1256px;top:110px;" width="16" height="16" viewBox="0 0 16 16"><circle cx="8" cy="8" r="5.3" fill="none" stroke="#3b5bdb" stroke-width="2"/></svg>
<div class="t" style="left:1276px;top:110.1px;font-size:15px;color:#a0a0a0;">game_over</div>
<div class="a" style="left:1360px;top:105px;width:134px;height:28px;background:#ffffff;"></div>
<svg style="left:1369px;top:110px;" width="16" height="16" viewBox="0 0 16 16"><circle cx="8" cy="8" r="5.3" fill="none" stroke="#3b5bdb" stroke-width="2"/></svg>
<div class="t" style="left:1389px;top:110.1px;font-size:15px;color:#474747;">start_menu</div>
<svg style="left:1476px;top:111px;" width="14" height="14" viewBox="0 0 14 14"><path d="M2 2 L12 12 M12 2 L2 12" stroke="#444" stroke-width="2"/></svg>
<svg style="left:1504px;top:110px;" width="16" height="16" viewBox="0 0 16 16"><path d="M8 1 V15 M1 8 H15" stroke="#444" stroke-width="2"/></svg>
<svg style="left:1873px;top:110px;" width="17" height="17" viewBox="0 0 17 17"><path d="M1 6 V1 H6 M11 1 H16 V6 M16 11 V16 H11 M6 16 H1 V11" fill="none" stroke="#444" stroke-width="1.6"/><path d="M2 2 L6 6 M15 2 L11 6 M15 15 L11 11 M2 15 L6 11" stroke="#444" stroke-width="1.6"/></svg>
<div class="a" style="left:307px;top:133px;width:1588px;height:991px;background:#ffffff;"></div>
<svg style="left:314px;top:141px;" width="16" height="16" viewBox="0 0 16 16"><path d="M2 1 L14 6.5 L8.5 8.5 L13 13 L11 15 L6.5 10.5 L4 15Z" fill="#474747"/></svg>
<div class="a" style="left:341px;top:137px;width:1px;height:25px;background:#dddddd;"></div>
<svg style="left:354px;top:141px;" width="16" height="16" viewBox="0 0 16 16"><path d="M8 0 L11 3 H5Z M8 16 L5 13 H11Z M0 8 L3 5 V11Z M16 8 L13 11 V5Z" fill="#2a7de8"/><circle cx="8" cy="8" r="2.5" fill="#2a7de8"/></svg>
<svg style="left:386px;top:141px;" width="16" height="16" viewBox="0 0 16 16"><path d="M4.5 13 A6 6 0 1 1 11.5 13" fill="none" stroke="#474747" stroke-width="2.2"/><circle cx="8" cy="8" r="1.8" fill="#474747"/><path d="M2 11 L6 15 L2 15Z" fill="#474747"/></svg>
<svg style="left:418px;top:141px;" width="16" height="16" viewBox="0 0 16 16"><path d="M3 13 L13 3" stroke="#474747" stroke-width="2"/><path d="M9 1.5 H14.5 V7Z M1.5 9 V14.5 H7Z" fill="#474747"/><circle cx="8" cy="8" r="1.6" fill="#474747"/></svg>
<div class="a" style="left:445px;top:137px;width:1px;height:25px;background:#dddddd;"></div>
<svg style="left:457px;top:141px;" width="16" height="16" viewBox="0 0 16 16"><path d="M1 1 H9 M1 1 V14 H7 M1 7.5 H7" fill="none" stroke="#474747" stroke-width="2"/><path d="M9 7 L15.5 11 L12.5 12 L15 15 L13.5 16 L11 13 L9 15Z" fill="#474747"/></svg>
<svg style="left:490px;top:141px;" width="16" height="16" viewBox="0 0 16 16"><path d="M8 0 V4 M1 7.5 H4" stroke="#474747" stroke-width="2"/><path d="M8 7 L15 11 L12 12 L14.5 15 L13 16 L10.5 13 L8 15.5Z" fill="#474747"/></svg>
<svg style="left:522px;top:141px;" width="16" height="16" viewBox="0 0 16 16"><path d="M3 8 Q2 5 4 5.5 L5.5 8 V2.5 Q5.5 1 7 1.5 V7 V1 Q8.5 0 9.5 1 V7 V2 Q11 1 12 2 V8 V4 Q13.5 3.5 14 4.5 V11 Q14 15.5 9 15.5 Q5.5 15.5 3 8Z" fill="#474747"/></svg>
<svg style="left:554px;top:141px;" width="16" height="16" viewBox="0 0 16 16"><path d="M1 15 V2 L15 15Z" fill="#474747"/><path d="M4 12 V8.5 L7.5 12Z" fill="#fff"/></svg>
<div class="a" style="left:581px;top:137px;width:1px;height:25px;background:#dddddd;"></div>
<svg style="left:594px;top:141px;" width="16" height="16" viewBox="0 0 16 16"><circle cx="2" cy="3" r="1.5" fill="#474747"/><circle cx="8" cy="2" r="1.5" fill="#474747"/><path d="M5 15 V9.5 Q5 6.5 8.5 6.5 Q12 6.5 12 9.5 V15" fill="none" stroke="#474747" stroke-width="2.2"/></svg>
<svg style="left:626px;top:141px;" width="16" height="16" viewBox="0 0 16 16"><path d="M4 1 V15 M0 4.5 H15 M0 10 H3" stroke="#474747" stroke-width="2"/><path d="M7 15 V10.5 Q7 7.5 10.5 7.5 Q14 7.5 14 10.5 V15" fill="none" stroke="#474747" stroke-width="2.2"/></svg>
<svg style="left:657px;top:140px;" width="8" height="18" viewBox="0 0 8 18"><circle cx="4" cy="2.5" r="2" fill="#b5b5b5"/><circle cx="4" cy="9" r="2" fill="#b5b5b5"/><circle cx="4" cy="15.5" r="2" fill="#b5b5b5"/></svg>
<div class="a" style="left:675px;top:137px;width:1px;height:25px;background:#dddddd;"></div>
<svg style="left:688px;top:141px;" width="16" height="16" viewBox="0 0 16 16"><path d="M4 7 V4.5 Q4 1 8 1 Q12 1 12 4.5 V7" fill="none" stroke="#474747" stroke-width="2.2"/><rect x="2" y="7" width="12" height="8.5" fill="#474747"/><rect x="7" y="10" width="2" height="3" fill="#fff"/></svg>
<svg style="left:720px;top:141px;" width="16" height="16" viewBox="0 0 16 16"><rect x="0" y="0" width="3" height="3" fill="#474747"/><rect x="12" y="0" width="3" height="3" fill="#474747"/><rect x="0" y="12" width="3" height="3" fill="#474747"/><rect x="12" y="12" width="3" height="3" fill="#474747"/><rect x="4" y="4" width="7" height="7" fill="#bbb"/><rect x="7" y="7" width="5" height="5" fill="#999"/></svg>
<div class="a" style="left:747px;top:137px;width:1px;height:25px;background:#dddddd;"></div>
<svg style="left:760px;top:141px;" width="16" height="16" viewBox="0 0 16 16"><path d="M3.5 12.5 L12.5 3.5" stroke="#474747" stroke-width="3.2"/><circle cx="12" cy="2.5" r="2.2" fill="#474747"/><circle cx="14" cy="4.5" r="2.2" fill="#474747"/><circle cx="2" cy="12" r="2.2" fill="#474747"/><circle cx="4" cy="14" r="2.2" fill="#474747"/></svg>
<div class="a" style="left:787px;top:137px;width:1px;height:25px;background:#dddddd;"></div>
<svg style="left:799px;top:141px;" width="17" height="16" viewBox="0 0 17 16"><circle cx="5" cy="5" r="3.5" fill="#3b5bdb"/><circle cx="10.5" cy="4.5" r="3" fill="#3b5bdb"/><rect x="2" y="7" width="10" height="7" fill="#3b5bdb"/><path d="M12 9 L16.5 6.5 V14.5 L12 12Z" fill="#3b5bdb"/></svg>
<div class="a" style="left:827px;top:137px;width:1px;height:25px;background:#dddddd;"></div>
<div class="t" style="left:840px;top:141.6px;font-size:15px;color:#474747;">View</div>
<svg style="left:888px;top:142px;" width="15" height="15" viewBox="0 0 15 15"><rect x="1" y="1" width="13" height="13" fill="none" stroke="#38a347" stroke-width="2"/><path d="M7.5 1 V14 M1 7.5 H14" stroke="#38a347" stroke-width="2"/></svg>
<div class="t" style="left:907px;top:141.6px;font-size:15px;color:#474747;">Layout</div>
<svg style="left:966px;top:141px;" width="16" height="16" viewBox="0 0 16 16"><circle cx="8" cy="2.8" r="2" fill="none" stroke="#38a347" stroke-width="1.7"/><path d="M8 5 V15 M4 7.5 H12 M1.5 10 Q3 15 8 15 Q13 15 14.5 10" fill="none" stroke="#38a347" stroke-width="2"/></svg>
<div class="a" style="left:307px;top:165px;width:1587px;height:959px;background:#9c9c9c;"></div>
<div class="a" style="left:308px;top:166px;width:1585px;height:15px;background:#e0e0e0;"></div>
<div class="a" style="left:308px;top:181px;width:15px;height:941px;background:#e0e0e0;"></div>
<div class="a" style="left:308px;top:166px;width:15px;height:15px;background:#8f8f8f;"></div>
<svg style="left:308px;top:166px;overflow:hidden" width="1585" height="15" viewBox="0 0 1585 15"><rect x="24.0" y="11" width="1" height="4" fill="#8a8a8a"/><rect x="34.0" y="11" width="1" height="4" fill="#8a8a8a"/><rect x="44.0" y="11" width="1" height="4" fill="#8a8a8a"/><rect x="54.0" y="11" width="1" height="4" fill="#8a8a8a"/><rect x="64.0" y="0" width="1" height="15" fill="#8a8a8a"/><rect x="74.0" y="11" width="1" height="4" fill="#8a8a8a"/><rect x="84.0" y="11" width="1" height="4" fill="#8a8a8a"/><rect x="94.0" y="11" width="1" height="4" fill="#8a8a8a"/><rect x="104.0" y="11" width="1" height="4" fill="#8a8a8a"/><rect x="114.0" y="8" width="1" height="7" fill="#8a8a8a"/><rect x="124.0" y="11" width="1" height="4" fill="#8a8a8a"/><rect x="134.0" y="11" width="1" height="4" fill="#8a8a8a"/><rect x="144.0" y="11" width="1" height="4" fill="#8a8a8a"/><rect x="154.0" y="11" width="1" height="4" fill="#8a8a8a"/><rect x="164.0" y="0" width="1" height="15" fill="#8a8a8a"/><rect x="174.0" y="11" width="1" height="4" fill="#8a8a8a"/><rect x="184.0" y="11" width="1" height="4" fill="#8a8a8a"/><rect x="194.0" y="11" width="1" height="4" fill="#8a8a8a"/><rect x="204.0" y="11" width="1" height="4" fill="#8a8a8a"/><rect x="214.0" y="8" width="1" height="7" fill="#8a8a8a"/><rect x="224.0" y="11" width="1" height="4" fill="#8a8a8a"/><rect x="234.0" y="11" width="1" height="4" fill="#8a8a8a"/><rect x="244.0" y="11" width="1" height="4" fill="#8a8a8a"/><rect x="254.0" y="11" width="1" height="4" fill="#8a8a8a"/><rect x="264.0" y="0" width="1" height="15" fill="#8a8a8a"/><rect x="274.0" y="11" width="1" height="4" fill="#8a8a8a"/><rect x="284.0" y="11" width="1" height="4" fill="#8a8a8a"/><rect x="294.0" y="11" width="1" height="4" fill="#8a8a8a"/><rect x="304.0" y="11" width="1" height="4" fill="#8a8a8a"/><rect x="314.0" y="8" width="1" height="7" fill="#8a8a8a"/><rect x="324.0" y="11" width="1" height="4" fill="#8a8a8a"/><rect x="334.0" y="11" width="1" height="4" fill="#8a8a8a"/><rect x="344.0" y="11" width="1" height="4" fill="#8a8a8a"/><rect x="354.0" y="11" width="1" height="4" fill="#8a8a8a"/><rect x="364.0" y="0" width="1" height="15" fill="#8a8a8a"/><rect x="374.0" y="11" width="1" height="4" fill="#8a8a8a"/><rect x="384.0" y="11" width="1" height="4" fill="#8a8a8a"/><rect x="394.0" y="11" width="1" height="4" fill="#8a8a8a"/><rect x="404.0" y="11" width="1" height="4" fill="#8a8a8a"/><rect x="414.0" y="8" width="1" height="7" fill="#8a8a8a"/><rect x="424.0" y="11" width="1" height="4" fill="#8a8a8a"/><rect x="434.0" y="11" width="1" height="4" fill="#8a8a8a"/><rect x="444.0" y="11" width="1" height="4" fill="#8a8a8a"/><rect x="454.0" y="11" width="1" height="4" fill="#8a8a8a"/><rect x="464.0" y="0" width="1" height="15" fill="#8a8a8a"/><rect x="474.0" y="11" width="1" height="4" fill="#8a8a8a"/><rect x="484.0" y="11" width="1" height="4" fill="#8a8a8a"/><rect x="494.0" y="11" width="1" height="4" fill="#8a8a8a"/><rect x="504.0" y="11" width="1" height="4" fill="#8a8a8a"/><rect x="514.0" y="8" width="1" height="7" fill="#8a8a8a"/><rect x="524.0" y="11" width="1" height="4" fill="#8a8a8a"/><rect x="534.0" y="11" width="1" height="4" fill="#8a8a8a"/><rect x="544.0" y="11" width="1" height="4" fill="#8a8a8a"/><rect x="554.0" y="11" width="1" height="4" fill="#8a8a8a"/><rect x="564.0" y="0" width="1" height="15" fill="#8a8a8a"/><rect x="574.0" y="11" width="1" height="4" fill="#8a8a8a"/><rect x="584.0" y="11" width="1" height="4" fill="#8a8a8a"/><rect x="594.0" y="11" width="1" height="4" fill="#8a8a8a"/><rect x="604.0" y="11" width="1" height="4" fill="#8a8a8a"/><rect x="614.0" y="8" width="1" height="7" fill="#8a8a8a"/><rect x="624.0" y="11" width="1" height="4" fill="#8a8a8a"/><rect x="634.0" y="11" width="1" height="4" fill="#8a8a8a"/><rect x="644.0" y="11" width="1" height="4" fill="#8a8a8a"/><rect x="654.0" y="11" width="1" height="4" fill="#8a8a8a"/><rect x="664.0" y="0" width="1" height="15" fill="#8a8a8a"/><rect x="674.0" y="11" width="1" height="4" fill="#8a8a8a"/><rect x="684.0" y="11" width="1" height="4" fill="#8a8a8a"/><rect x="694.0" y="11" width="1" height="4" fill="#8a8a8a"/><rect x="704.0" y="11" width="1" height="4" fill="#8a8a8a"/><rect x="714.0" y="8" width="1" height="7" fill="#8a8a8a"/><rect x="724.0" y="11" width="1" height="4" fill="#8a8a8a"/><rect x="734.0" y="11" width="1" height="4" fill="#8a8a8a"/><rect x="744.0" y="11" width="1" height="4" fill="#8a8a8a"/><rect x="754.0" y="11" width="1" height="4" fill="#8a8a8a"/><rect x="764.0" y="0" width="1" height="15" fill="#8a8a8a"/><rect x="774.0" y="11" width="1" height="4" fill="#8a8a8a"/><rect x="784.0" y="11" width="1" height="4" fill="#8a8a8a"/><rect x="794.0" y="11" width="1" height="4" fill="#8a8a8a"/><rect x="804.0" y="11" width="1" height="4" fill="#8a8a8a"/><rect x="814.0" y="8" width="1" height="7" fill="#8a8a8a"/><rect x="824.0" y="11" width="1" height="4" fill="#8a8a8a"/><rect x="834.0" y="11" width="1" height="4" fill="#8a8a8a"/><rect x="844.0" y="11" width="1" height="4" fill="#8a8a8a"/><rect x="854.0" y="11" width="1" height="4" fill="#8a8a8a"/><rect x="864.0" y="0" width="1" height="15" fill="#8a8a8a"/><rect x="874.0" y="11" width="1" height="4" fill="#8a8a8a"/><rect x="884.0" y="11" width="1" height="4" fill="#8a8a8a"/><rect x="894.0" y="11" width="1" height="4" fill="#8a8a8a"/><rect x="904.0" y="11" width="1" height="4" fill="#8a8a8a"/><rect x="914.0" y="8" width="1" height="7" fill="#8a8a8a"/><rect x="924.0" y="11" width="1" height="4" fill="#8a8a8a"/><rect x="934.0" y="11" width="1" height="4" fill="#8a8a8a"/><rect x="944.0" y="11" width="1" height="4" fill="#8a8a8a"/><rect x="954.0" y="11" width="1" height="4" fill="#8a8a8a"/><rect x="964.0" y="0" width="1" height="15" fill="#8a8a8a"/><rect x="974.0" y="11" width="1" height="4" fill="#8a8a8a"/><rect x="984.0" y="11" width="1" height="4" fill="#8a8a8a"/><rect x="994.0" y="11" width="1" height="4" fill="#8a8a8a"/><rect x="1004.0" y="11" width="1" height="4" fill="#8a8a8a"/><rect x="1014.0" y="8" width="1" height="7" fill="#8a8a8a"/><rect x="1024.0" y="11" width="1" height="4" fill="#8a8a8a"/><rect x="1034.0" y="11" width="1" height="4" fill="#8a8a8a"/><rect x="1044.0" y="11" width="1" height="4" fill="#8a8a8a"/><rect x="1054.0" y="11" width="1" height="4" fill="#8a8a8a"/><rect x="1064.0" y="0" width="1" height="15" fill="#8a8a8a"/><rect x="1074.0" y="11" width="1" height="4" fill="#8a8a8a"/><rect x="1084.0" y="11" width="1" height="4" fill="#8a8a8a"/><rect x="1094.0" y="11" width="1" height="4" fill="#8a8a8a"/><rect x="1104.0" y="11" width="1" height="4" fill="#8a8a8a"/><rect x="1114.0" y="8" width="1" height="7" fill="#8a8a8a"/><rect x="1124.0" y="11" width="1" height="4" fill="#8a8a8a"/><rect x="1134.0" y="11" width="1" height="4" fill="#8a8a8a"/><rect x="1144.0" y="11" width="1" height="4" fill="#8a8a8a"/><rect x="1154.0" y="11" width="1" height="4" fill="#8a8a8a"/><rect x="1164.0" y="0" width="1" height="15" fill="#8a8a8a"/><rect x="1174.0" y="11" width="1" height="4" fill="#8a8a8a"/><rect x="1184.0" y="11" width="1" height="4" fill="#8a8a8a"/><rect x="1194.0" y="11" width="1" height="4" fill="#8a8a8a"/><rect x="1204.0" y="11" width="1" height="4" fill="#8a8a8a"/><rect x="1214.0" y="8" width="1" height="7" fill="#8a8a8a"/><rect x="1224.0" y="11" width="1" height="4" fill="#8a8a8a"/><rect x="1234.0" y="11" width="1" height="4" fill="#8a8a8a"/><rect x="1244.0" y="11" width="1" height="4" fill="#8a8a8a"/><rect x="1254.0" y="11" width="1" height="4" fill="#8a8a8a"/><rect x="1264.0" y="0" width="1" height="15" fill="#8a8a8a"/><rect x="1274.0" y="11" width="1" height="4" fill="#8a8a8a"/><rect x="1284.0" y="11" width="1" height="4" fill="#8a8a8a"/><rect x="1294.0" y="11" width="1" height="4" fill="#8a8a8a"/><rect x="1304.0" y="11" width="1" height="4" fill="#8a8a8a"/><rect x="1314.0" y="8" width="1" height="7" fill="#8a8a8a"/><rect x="1324.0" y="11" width="1" height="4" fill="#8a8a8a"/><rect x="1334.0" y="11" width="1" height="4" fill="#8a8a8a"/><rect x="1344.0" y="11" width="1" height="4" fill="#8a8a8a"/><rect x="1354.0" y="11" width="1" height="4" fill="#8a8a8a"/><rect x="1364.0" y="0" width="1" height="15" fill="#8a8a8a"/><rect x="1374.0" y="11" width="1" height="4" fill="#8a8a8a"/><rect x="1384.0" y="11" width="1" height="4" fill="#8a8a8a"/><rect x="1394.0" y="11" width="1" height="4" fill="#8a8a8a"/><rect x="1404.0" y="11" width="1" height="4" fill="#8a8a8a"/><rect x="1414.0" y="8" width="1" height="7" fill="#8a8a8a"/><rect x="1424.0" y="11" width="1" height="4" fill="#8a8a8a"/><rect x="1434.0" y="11" width="1" height="4" fill="#8a8a8a"/><rect x="1444.0" y="11" width="1" height="4" fill="#8a8a8a"/><rect x="1454.0" y="11" width="1" height="4" fill="#8a8a8a"/><rect x="1464.0" y="0" width="1" height="15" fill="#8a8a8a"/><rect x="1474.0" y="11" width="1" height="4" fill="#8a8a8a"/><rect x="1484.0" y="11" width="1" height="4" fill="#8a8a8a"/><rect x="1494.0" y="11" width="1" height="4" fill="#8a8a8a"/><rect x="1504.0" y="11" width="1" height="4" fill="#8a8a8a"/><rect x="1514.0" y="8" width="1" height="7" fill="#8a8a8a"/><rect x="1524.0" y="11" width="1" height="4" fill="#8a8a8a"/><rect x="1534.0" y="11" width="1" height="4" fill="#8a8a8a"/><rect x="1544.0" y="11" width="1" height="4" fill="#8a8a8a"/><rect x="1554.0" y="11" width="1" height="4" fill="#8a8a8a"/><rect x="1564.0" y="0" width="1" height="15" fill="#8a8a8a"/><rect x="1574.0" y="11" width="1" height="4" fill="#8a8a8a"/><text x="66.5" y="11" font-size="10" fill="#888" font-family="Liberation Sans">-100</text><text x="166.5" y="11" font-size="10" fill="#888" font-family="Liberation Sans">0</text><text x="266.5" y="11" font-size="10" fill="#888" font-family="Liberation Sans">100</text><text x="366.5" y="11" font-size="10" fill="#888" font-family="Liberation Sans">200</text><text x="466.5" y="11" font-size="10" fill="#888" font-family="Liberation Sans">300</text><text x="566.5" y="11" font-size="10" fill="#888" font-family="Liberation Sans">400</text><text x="666.5" y="11" font-size="10" fill="#888" font-family="Liberation Sans">500</text><text x="766.5" y="11" font-size="10" fill="#888" font-family="Liberation Sans">600</text><text x="866.5" y="11" font-size="10" fill="#888" font-family="Liberation Sans">700</text><text x="966.5" y="11" font-size="10" fill="#888" font-family="Liberation Sans">800</text><text x="1066.5" y="11" font-size="10" fill="#888" font-family="Liberation Sans">900</text><text x="1166.5" y="11" font-size="10" fill="#888" font-family="Liberation Sans">1000</text><text x="1266.5" y="11" font-size="10" fill="#888" font-family="Liberation Sans">1100</text><text x="1366.5" y="11" font-size="10" fill="#888" font-family="Liberation Sans">1200</text><text x="1466.5" y="11" font-size="10" fill="#888" font-family="Liberation Sans">1300</text><text x="1566.5" y="11" font-size="10" fill="#888" font-family="Liberation Sans">1400</text></svg>
<svg style="left:308px;top:181px;overflow:hidden" width="15" height="941" viewBox="0 0 15 941"><rect x="11" y="5.0" width="4" height="1" fill="#8a8a8a"/><rect x="11" y="15.0" width="4" height="1" fill="#8a8a8a"/><rect x="11" y="25.0" width="4" height="1" fill="#8a8a8a"/><rect x="11" y="35.0" width="4" height="1" fill="#8a8a8a"/><rect x="8" y="45.0" width="7" height="1" fill="#8a8a8a"/><rect x="11" y="55.0" width="4" height="1" fill="#8a8a8a"/><rect x="11" y="65.0" width="4" height="1" fill="#8a8a8a"/><rect x="11" y="75.0" width="4" height="1" fill="#8a8a8a"/><rect x="11" y="85.0" width="4" height="1" fill="#8a8a8a"/><rect x="0" y="95.0" width="15" height="1" fill="#8a8a8a"/><rect x="11" y="105.0" width="4" height="1" fill="#8a8a8a"/><rect x="11" y="115.0" width="4" height="1" fill="#8a8a8a"/><rect x="11" y="125.0" width="4" height="1" fill="#8a8a8a"/><rect x="11" y="135.0" width="4" height="1" fill="#8a8a8a"/><rect x="8" y="145.0" width="7" height="1" fill="#8a8a8a"/><rect x="11" y="155.0" width="4" height="1" fill="#8a8a8a"/><rect x="11" y="165.0" width="4" height="1" fill="#8a8a8a"/><rect x="11" y="175.0" width="4" height="1" fill="#8a8a8a"/><rect x="11" y="185.0" width="4" height="1" fill="#8a8a8a"/><rect x="0" y="195.0" width="15" height="1" fill="#8a8a8a"/><rect x="11" y="205.0" width="4" height="1" fill="#8a8a8a"/><rect x="11" y="215.0" width="4" height="1" fill="#8a8a8a"/><rect x="11" y="225.0" width="4" height="1" fill="#8a8a8a"/><rect x="11" y="235.0" width="4" height="1" fill="#8a8a8a"/><rect x="8" y="245.0" width="7" height="1" fill="#8a8a8a"/><rect x="11" y="255.0" width="4" height="1" fill="#8a8a8a"/><rect x="11" y="265.0" width="4" height="1" fill="#8a8a8a"/><rect x="11" y="275.0" width="4" height="1" fill="#8a8a8a"/><rect x="11" y="285.0" width="4" height="1" fill="#8a8a8a"/><rect x="0" y="295.0" width="15" height="1" fill="#8a8a8a"/><rect x="11" y="305.0" width="4" height="1" fill="#8a8a8a"/><rect x="11" y="315.0" width="4" height="1" fill="#8a8a8a"/><rect x="11" y="325.0" width="4" height="1" fill="#8a8a8a"/><rect x="11" y="335.0" width="4" height="1" fill="#8a8a8a"/><rect x="8" y="345.0" width="7" height="1" fill="#8a8a8a"/><rect x="11" y="355.0" width="4" height="1" fill="#8a8a8a"/><rect x="11" y="365.0" width="4" height="1" fill="#8a8a8a"/><rect x="11" y="375.0" width="4" height="1" fill="#8a8a8a"/><rect x="11" y="385.0" width="4" height="1" fill="#8a8a8a"/><rect x="0" y="395.0" width="15" height="1" fill="#8a8a8a"/><rect x="11" y="405.0" width="4" height="1" fill="#8a8a8a"/><rect x="11" y="415.0" width="4" height="1" fill="#8a8a8a"/><rect x="11" y="425.0" width="4" height="1" fill="#8a8a8a"/><rect x="11" y="435.0" width="4" height="1" fill="#8a8a8a"/><rect x="8" y="445.0" width="7" height="1" fill="#8a8a8a"/><rect x="11" y="455.0" width="4" height="1" fill="#8a8a8a"/><rect x="11" y="465.0" width="4" height="1" fill="#8a8a8a"/><rect x="11" y="475.0" width="4" height="1" fill="#8a8a8a"/><rect x="11" y="485.0" width="4" height="1" fill="#8a8a8a"/><rect x="0" y="495.0" width="15" height="1" fill="#8a8a8a"/><rect x="11" y="505.0" width="4" height="1" fill="#8a8a8a"/><rect x="11" y="515.0" width="4" height="1" fill="#8a8a8a"/><rect x="11" y="525.0" width="4" height="1" fill="#8a8a8a"/><rect x="11" y="535.0" width="4" height="1" fill="#8a8a8a"/><rect x="8" y="545.0" width="7" height="1" fill="#8a8a8a"/><rect x="11" y="555.0" width="4" height="1" fill="#8a8a8a"/><rect x="11" y="565.0" width="4" height="1" fill="#8a8a8a"/><rect x="11" y="575.0" width="4" height="1" fill="#8a8a8a"/><rect x="11" y="585.0" width="4" height="1" fill="#8a8a8a"/><rect x="0" y="595.0" width="15" height="1" fill="#8a8a8a"/><rect x="11" y="605.0" width="4" height="1" fill="#8a8a8a"/><rect x="11" y="615.0" width="4" height="1" fill="#8a8a8a"/><rect x="11" y="625.0" width="4" height="1" fill="#8a8a8a"/><rect x="11" y="635.0" width="4" height="1" fill="#8a8a8a"/><rect x="8" y="645.0" width="7" height="1" fill="#8a8a8a"/><rect x="11" y="655.0" width="4" height="1" fill="#8a8a8a"/><rect x="11" y="665.0" width="4" height="1" fill="#8a8a8a"/><rect x="11" y="675.0" width="4" height="1" fill="#8a8a8a"/><rect x="11" y="685.0" width="4" height="1" fill="#8a8a8a"/><rect x="0" y="695.0" width="15" height="1" fill="#8a8a8a"/><rect x="11" y="705.0" width="4" height="1" fill="#8a8a8a"/><rect x="11" y="715.0" width="4" height="1" fill="#8a8a8a"/><rect x="11" y="725.0" width="4" height="1" fill="#8a8a8a"/><rect x="11" y="735.0" width="4" height="1" fill="#8a8a8a"/><rect x="8" y="745.0" width="7" height="1" fill="#8a8a8a"/><rect x="11" y="755.0" width="4" height="1" fill="#8a8a8a"/><rect x="11" y="765.0" width="4" height="1" fill="#8a8a8a"/><rect x="11" y="775.0" width="4" height="1" fill="#8a8a8a"/><rect x="11" y="785.0" width="4" height="1" fill="#8a8a8a"/><rect x="0" y="795.0" width="15" height="1" fill="#8a8a8a"/><rect x="11" y="805.0" width="4" height="1" fill="#8a8a8a"/><rect x="11" y="815.0" width="4" height="1" fill="#8a8a8a"/><rect x="11" y="825.0" width="4" height="1" fill="#8a8a8a"/><rect x="11" y="835.0" width="4" height="1" fill="#8a8a8a"/><rect x="8" y="845.0" width="7" height="1" fill="#8a8a8a"/><rect x="11" y="855.0" width="4" height="1" fill="#8a8a8a"/><rect x="11" y="865.0" width="4" height="1" fill="#8a8a8a"/><rect x="11" y="875.0" width="4" height="1" fill="#8a8a8a"/><rect x="11" y="885.0" width="4" height="1" fill="#8a8a8a"/><rect x="0" y="895.0" width="15" height="1" fill="#8a8a8a"/><rect x="11" y="905.0" width="4" height="1" fill="#8a8a8a"/><rect x="11" y="915.0" width="4" height="1" fill="#8a8a8a"/><rect x="11" y="925.0" width="4" height="1" fill="#8a8a8a"/><rect x="11" y="935.0" width="4" height="1" fill="#8a8a8a"/><text transform="translate(11 93.5) rotate(-90)" font-size="10" fill="#888" font-family="Liberation Sans">0</text><text transform="translate(11 193.5) rotate(-90)" font-size="10" fill="#888" font-family="Liberation Sans">100</text><text transform="translate(11 293.5) rotate(-90)" font-size="10" fill="#888" font-family="Liberation Sans">200</text><text transform="translate(11 393.5) rotate(-90)" font-size="10" fill="#888" font-family="Liberation Sans">300</text><text transform="translate(11 493.5) rotate(-90)" font-size="10" fill="#888" font-family="Liberation Sans">400</text><text transform="translate(11 593.5) rotate(-90)" font-size="10" fill="#888" font-family="Liberation Sans">500</text><text transform="translate(11 693.5) rotate(-90)" font-size="10" fill="#888" font-family="Liberation Sans">600</text><text transform="translate(11 793.5) rotate(-90)" font-size="10" fill="#888" font-family="Liberation Sans">700</text><text transform="translate(11 893.5) rotate(-90)" font-size="10" fill="#888" font-family="Liberation Sans">800</text><text transform="translate(11 993.5) rotate(-90)" font-size="10" fill="#888" font-family="Liberation Sans">900</text></svg>
<div class="a" style="left:323px;top:181px;width:1570px;height:941px;background:#4e4e4e;overflow:hidden">
<div class="a" style="left:149px;top:0px;width:1px;height:95px;background:#8cbf3a;"></div>
<div class="a" style="left:149px;top:96px;width:1px;height:600px;background:#6f9a70;"></div>
<div class="a" style="left:149px;top:696px;width:1px;height:245px;background:#8cbf3a;"></div>
<div class="a" style="left:0px;top:95px;width:149px;height:1px;background:#d8454a;"></div>
<div class="a" style="left:150px;top:95px;width:1023px;height:1px;background:#a24fa8;"></div>
<div class="a" style="left:1173px;top:95px;width:397px;height:1px;background:#d8454a;"></div>
<div class="a" style="left:1173px;top:96px;width:1px;height:600px;background:#6a62c8;"></div>
<div class="a" style="left:150px;top:695px;width:1023px;height:1px;background:#6a62c8;"></div>
<svg style="left:141px;top:87px" width="17" height="17"><circle cx="8.5" cy="8.5" r="3" fill="#8a8a8a"/><path d="M8.5 1 V16 M1 8.5 H16" stroke="#8a8a8a" stroke-width="1.2"/></svg>
<svg style="left:12px;top:10px" width="14" height="14"><circle cx="7" cy="7" r="6.5" fill="#eee"/><rect x="3.5" y="6" width="7" height="2" fill="#333"/></svg>
<div class="t" style="left:43px;top:11px;font-size:14px;color:#454545">100 %</div>
<svg style="left:99px;top:10px" width="14" height="14"><circle cx="7" cy="7" r="6.5" fill="#eee"/><rect x="3.5" y="6" width="7" height="2" fill="#333"/><rect x="6" y="3.5" width="2" height="7" fill="#333"/></svg>
<div class="a" style="left:150px;top:274px;width:1100px;height:2px;background:#e0865c;"></div>
<div class="a" style="left:149px;top:274px;width:2px;height:303px;background:#e0865c;"></div>
<div class="a" style="left:150px;top:575px;width:1100px;height:2px;background:#e0865c;"></div>
<svg style="left:138px;top:264px" width="22" height="22"><path d="M11 3 V19 M3 11 H19" stroke="#f08a8a" stroke-width="2"/><path d="M11 7 V15 M7 11 H15" stroke="#fff" stroke-width="1"/></svg>
<div class="t" style="left:405px;top:348.9px;font-size:15.8px;font-family:'Liberation Mono',monospace;font-weight:700;color:#f2f2f2;transform:scaleY(1.3);transform-origin:left 12.1px;">You inherited the farm with 2 Cows Erna and Emma!</div>
<div class="t" style="left:348px;top:377.9px;font-size:15.8px;font-family:'Liberation Mono',monospace;font-weight:700;color:#f2f2f2;transform:scaleY(1.3);transform-origin:left 12.1px;">Now you have to keep them alive, so you can feed your family.</div>
<div class="t" style="left:481px;top:435.9px;font-size:15.8px;font-family:'Liberation Mono',monospace;font-weight:700;color:#f2f2f2;transform:scaleY(1.3);transform-origin:left 12.1px;">1. Harvest GRAS to feed the cows.</div>
<div class="t" style="left:304px;top:464.9px;font-size:15.8px;font-family:'Liberation Mono',monospace;font-weight:700;color:#f2f2f2;transform:scaleY(1.3);transform-origin:left 12.1px;">2. Discard  the poo at the DUNGHEAP to prevent cows from getting sick.</div>
<div class="t" style="left:253px;top:493.9px;font-size:15.8px;font-family:'Liberation Mono',monospace;font-weight:700;color:#f2f2f2;transform:scaleY(1.3);transform-origin:left 12.1px;">3. Milk the cows and bring the milk to the family.</div>
<div class="t" style="left:461px;top:157px;font-size:80px;font-family:'Liberation Serif',serif;font-weight:700;color:#fff;-webkit-text-stroke:6px #d6a50c;paint-order:stroke fill;letter-spacing:7px;transform:scaleX(0.78);transform-origin:left top;">FARM LIFE</div>
</div>
<div class="a" style="left:307px;top:1134px;width:1588px;height:248px;background:#ffffff;"></div>
<div class="t" style="left:315px;top:1142.6px;font-size:15px;color:#474747;">Output:</div>
<div class="a" style="left:1795px;top:1138px;width:45px;height:26px;background:#ebebeb;border:1px solid #dddddd"></div>
<div class="t" style="left:1801px;top:1142.6px;font-size:15px;color:#474747;">Copy</div>
<div class="a" style="left:1844px;top:1138px;width:47px;height:26px;background:#ebebeb;border:1px solid #dddddd"></div>
<div class="t" style="left:1850px;top:1142.6px;font-size:15px;color:#474747;">Clear</div>
<div class="a" style="left:311px;top:1168px;width:1580px;height:180px;background:#ebebeb;border:1px solid #d6d6d6"></div>
<div class="t" style="left:315px;top:1169.9px;font-size:13.2px;color:#3a3a3a;font-family:'Liberation Mono',monospace;">Player</div>
<div class="t" style="left:315px;top:1185.9px;font-size:13.2px;color:#3a3a3a;font-family:'Liberation Mono',monospace;">gras body entered</div>
<div class="t" style="left:315px;top:1201.9px;font-size:13.2px;color:#3a3a3a;font-family:'Liberation Mono',monospace;">exit area</div>
<div class="t" style="left:315px;top:1217.9px;font-size:13.2px;color:#3a3a3a;font-family:'Liberation Mono',monospace;">ACTION</div>
<div class="t" style="left:315px;top:1233.9px;font-size:13.2px;color:#3a3a3a;font-family:'Liberation Mono',monospace;">tick family farm_level</div>
<div class="t" style="left:315px;top:1249.9px;font-size:13.2px;color:#3a3a3a;font-family:'Liberation Mono',monospace;">tick cow Emma</div>
<div class="t" style="left:315px;top:1265.9px;font-size:13.2px;color:#3a3a3a;font-family:'Liberation Mono',monospace;">tick cow Erna</div>
<div class="t" style="left:315px;top:1281.9px;font-size:13.2px;color:#3a3a3a;font-family:'Liberation Mono',monospace;">ACTION</div>
<div class="t" style="left:315px;top:1297.9px;font-size:13.2px;color:#3a3a3a;font-family:'Liberation Mono',monospace;">gras entered</div>
<div class="t" style="left:315px;top:1313.9px;font-size:13.2px;color:#3a3a3a;font-family:'Liberation Mono',monospace;">Player</div>
<div class="t" style="left:315px;top:1329.9px;font-size:13.2px;color:#3a3a3a;font-family:'Liberation Mono',monospace;">gras body entered</div>
<div class="a" style="left:1883px;top:1331px;width:4px;height:13px;background:#c4c4c4;border-radius:2px"></div>
<div class="t" style="left:317px;top:1356.6px;font-size:15px;color:#3f86ea;">Output</div>
<svg style="left:380px;top:1359px;" width="10" height="10" viewBox="0 0 10 10"><circle cx="5" cy="5" r="4.3" fill="#f25454"/></svg>
<div class="t" style="left:392px;top:1356.6px;font-size:15px;color:#474747;">Debugger (1852)</div>
<div class="t" style="left:520px;top:1356.6px;font-size:15px;color:#474747;">Audio</div>
<div class="t" style="left:575px;top:1356.6px;font-size:15px;color:#474747;">Animation</div>
<div class="t" style="left:1790px;top:1356.6px;font-size:15px;color:#a0a0a0;">3.2.stable</div>
<svg style="left:1869px;top:1357px;" width="16" height="14" viewBox="0 0 16 14"><rect x="0" y="0" width="15" height="1.8" fill="#474747"/><path d="M4 4 L7.5 8 H5 V14 H3 V8 H0.5Z M12 4 L15.5 8 H13 V14 H11 V8 H8.5Z" fill="#474747"/></svg>
<!--INSPECTOR-->
<div class="a" style="left:1905px;top:105px;width:82px;height:28px;background:#ffffff;"></div>
<div class="t" style="left:1914px;top:110.1px;font-size:15px;color:#474747;">Inspector</div>
<div class="a" style="left:1988px;top:105px;width:55px;height:28px;background:#e8e8e8;"></div>
<div class="t" style="left:1997px;top:110.1px;font-size:15px;color:#a0a0a0;">Node</div>
<svg style="left:2545px;top:110px;" width="8" height="18" viewBox="0 0 8 18"><circle cx="4" cy="2.5" r="2" fill="#aaa"/><circle cx="4" cy="8" r="2" fill="#aaa"/><circle cx="4" cy="13.5" r="2" fill="#aaa"/></svg>
<div class="a" style="left:1905px;top:133px;width:646px;height:1249px;background:#ffffff;"></div>
<svg style="left:1914px;top:141px;" width="16" height="16" viewBox="0 0 16 16"><path d="M1 1 H9 L13 5 V9 H9 V15 H1Z" fill="#474747"/><path d="M9 1 V5 H13" fill="#fff"/><path d="M12 9 V16 M8.5 12.5 H15.5" stroke="#22c32a" stroke-width="2"/></svg>
<svg style="left:1947px;top:142px;" width="16" height="14" viewBox="0 0 16 14"><path d="M1 2 H6 L7.5 3.5 H13 V6 H4 L1 13Z" fill="#474747"/><path d="M4 6.5 H15.5 L12.5 13.5 H1Z" fill="#474747"/></svg>
<svg style="left:1979px;top:141px;" width="16" height="16" viewBox="0 0 16 16"><path d="M1 1 H12 L15 4 V15 H1Z" fill="#c2c2c2"/><rect x="4" y="1" width="7" height="4" fill="#fff"/><circle cx="8" cy="10" r="2" fill="#fff"/></svg>
<svg style="left:2475px;top:141px;" width="12" height="16" viewBox="0 0 12 16"><path d="M9.5 1.5 L3 8 L9.5 14.5" fill="none" stroke="#555" stroke-width="1.8"/></svg>
<svg style="left:2499px;top:141px;" width="12" height="16" viewBox="0 0 12 16"><path d="M2.5 1.5 L9 8 L2.5 14.5" fill="none" stroke="#bbb" stroke-width="1.8"/></svg>
<svg style="left:2525px;top:141px;" width="16" height="16" viewBox="0 0 16 16"><path d="M4 5 A6 6 0 1 1 3.5 11" fill="none" stroke="#555" stroke-width="2"/><path d="M0.5 4.5 L6 4 L3 9Z" fill="#555"/><path d="M9 4.5 V8.5 H12" fill="none" stroke="#555" stroke-width="1.6"/></svg>
<svg style="left:1916px;top:174px;" width="14" height="10" viewBox="0 0 14 10"><path d="M0 5 L4.5 0 H14 V10 H4.5Z" fill="#38a347"/><circle cx="4.8" cy="5" r="1.3" fill="#fff"/></svg>
<div class="t" style="left:1935px;top:171.1px;font-size:15px;color:#474747;">instructions</div>
<svg style="left:2524px;top:172px;" width="16" height="16" viewBox="0 0 16 16"><path d="M4 1 V10" stroke="#555" stroke-width="1.8"/><path d="M2 8 H6 V13 Q6 15 4 15 Q2 15 2 13Z" fill="#555"/><path d="M12 6 V15 M9.5 1 V5 Q12 7 14.5 5 V1" fill="none" stroke="#555" stroke-width="1.8"/></svg>
<div class="a" style="left:1909px;top:197px;width:638px;height:26px;background:#ebebeb;border:1px solid #dddddd"></div>
<div class="t" style="left:1915px;top:201.6px;font-size:15px;color:#9e9e9e;">Filter properties</div>
<svg style="left:2523px;top:202px;" width="16" height="16" viewBox="0 0 16 16"><circle cx="6.5" cy="6.5" r="4.6" fill="none" stroke="#555" stroke-width="2"/><path d="M10 10 L14 14" stroke="#555" stroke-width="2.3"/></svg>
<div class="a" style="left:1909px;top:226px;width:638px;height:1156px;background:#ebebeb;border:1px solid #d6d6d6"></div>
<div class="a" style="left:2539px;top:231px;width:4px;height:907px;background:#bcbcbc;border-radius:2px"></div>
<div class="a" style="left:1913px;top:231px;width:618px;height:22px;background:#cccccc;"></div>
<svg style="left:2196px;top:237px;" width="14" height="10" viewBox="0 0 14 10"><path d="M0 5 L4.5 0 H14 V10 H4.5Z" fill="#38a347"/><circle cx="4.8" cy="5" r="1.3" fill="#fff"/></svg>
<div class="t" style="left:2214px;top:234.1px;font-size:15px;color:#474747;">Label</div>
<div class="a" style="left:1913px;top:253px;width:618px;height:22px;background:#bbbbbb;"></div>
<div class="t" style="left:1913px;top:255.6px;font-size:15px;color:#6a6a6a;">Text</div>
<svg style="left:2515px;top:256px;" width="16" height="16" viewBox="0 0 16 16"><path d="M4.2 4.8 A5.3 5.3 0 1 1 3.2 10" fill="none" stroke="#555" stroke-width="2"/><path d="M1.5 2.5 L6.8 3.2 L3.2 7.8Z" fill="#555"/></svg>
<div class="a" style="left:1913px;top:275px;width:585px;height:108px;background:#ebebeb;"></div>
<div class="a" style="left:2498px;top:275px;width:33px;height:108px;background:#e1e1e1;"></div>
<div class="t" style="left:1919px;top:279.6px;font-size:15px;color:#474747;">You inherited the farm with 2 Cows Erna and Emma!</div>
<div class="t" style="left:1919px;top:301.6px;font-size:15px;color:#474747;">Now you have to keep them alive, so you can feed your family.</div>
<div class="t" style="left:1919px;top:345.6px;font-size:15px;color:#474747;">1. Harvest GRAS to feed the cows.</div>
<div class="t" style="left:1919px;top:367.6px;font-size:15px;color:#474747;">2. Discard  the poo at the DUNGHEAP to prevent cows from getting sick.</div>
<div class="a" style="left:1913px;top:380px;width:585px;height:3px;background:#ebebeb;"></div>
<div class="a" style="left:2490px;top:283px;width:4px;height:61px;background:#c4c4c4;border-radius:2px"></div>
<svg style="left:2509px;top:321px;" width="16" height="16" viewBox="0 0 16 16"><path d="M1 5 V1 H5 M11 1 H15 V5 M15 11 V15 H11 M5 15 H1 V11" fill="none" stroke="#474747" stroke-width="1.6"/><path d="M2 2 L5.5 5.5 M14 2 L10.5 5.5 M14 14 L10.5 10.5 M2 14 L5.5 10.5" stroke="#474747" stroke-width="1.6"/></svg>
<div class="t" style="left:1913px;top:392.2px;font-size:15px;color:#666;">Align</div>
<div class="a" style="left:2222px;top:387px;width:309px;height:26px;background:#e1e1e1;"></div>
<svg style="left:2203px;top:392px;" width="16" height="16" viewBox="0 0 16 16"><path d="M4.2 4.8 A5.3 5.3 0 1 1 3.2 10" fill="none" stroke="#555" stroke-width="2"/><path d="M1.5 2.5 L6.8 3.2 L3.2 7.8Z" fill="#555"/></svg>
<div class="t" style="left:2228px;top:391.6px;font-size:15px;color:#474747;">Center</div>
<svg style="left:2515px;top:394px;" width="12" height="10" viewBox="0 0 12 10"><path d="M1 3.0 L6 7.0 L11 3.0" fill="none" stroke="#444" stroke-width="1.8"/></svg>
<div class="t" style="left:1913px;top:422.2px;font-size:15px;color:#666;">Valign</div>
<div class="a" style="left:2222px;top:417px;width:309px;height:26px;background:#e1e1e1;"></div>
<svg style="left:2203px;top:422px;" width="16" height="16" viewBox="0 0 16 16"><path d="M4.2 4.8 A5.3 5.3 0 1 1 3.2 10" fill="none" stroke="#555" stroke-width="2"/><path d="M1.5 2.5 L6.8 3.2 L3.2 7.8Z" fill="#555"/></svg>
<div class="t" style="left:2228px;top:421.6px;font-size:15px;color:#474747;">Center</div>
<svg style="left:2515px;top:424px;" width="12" height="10" viewBox="0 0 12 10"><path d="M1 3.0 L6 7.0 L11 3.0" fill="none" stroke="#444" stroke-width="1.8"/></svg>
<div class="t" style="left:1913px;top:452.2px;font-size:15px;color:#666;">Autowrap</div>
<div class="a" style="left:2222px;top:447px;width:309px;height:26px;background:#e1e1e1;"></div>
<div class="a" style="left:2227px;top:453px;width:14px;height:14px;background:#c9c9c9;border-radius:2px"></div>
<div class="t" style="left:2246px;top:451.6px;font-size:15px;color:#474747;">On</div>
<div class="t" style="left:1913px;top:482.2px;font-size:15px;color:#666;">Clip Text</div>
<div class="a" style="left:2222px;top:477px;width:309px;height:26px;background:#e1e1e1;"></div>
<div class="a" style="left:2227px;top:483px;width:14px;height:14px;background:#c9c9c9;border-radius:2px"></div>
<div class="t" style="left:2246px;top:481.6px;font-size:15px;color:#474747;">On</div>
<div class="t" style="left:1913px;top:512.2px;font-size:15px;color:#666;">Uppercase</div>
<div class="a" style="left:2222px;top:507px;width:309px;height:26px;background:#e1e1e1;"></div>
<div class="a" style="left:2227px;top:513px;width:14px;height:14px;background:#c9c9c9;border-radius:2px"></div>
<div class="t" style="left:2246px;top:511.6px;font-size:15px;color:#474747;">On</div>
<div class="t" style="left:1913px;top:542.2px;font-size:15px;color:#666;">Visible Characters</div>
<div class="a" style="left:2222px;top:537px;width:309px;height:26px;background:#e1e1e1;"></div>
<div class="t" style="left:2238px;top:541.6px;font-size:15px;color:#474747;">-1</div>
<svg style="left:2510px;top:541px;" width="12" height="18" viewBox="0 0 12 18"><path d="M2 6 L6 2 L10 6M2 12 L6 16 L10 12" fill="none" stroke="#555" stroke-width="1.7"/></svg>
<div class="t" style="left:1913px;top:572.2px;font-size:15px;color:#666;">Percent Visible</div>
<div class="a" style="left:2222px;top:567px;width:309px;height:26px;background:#e1e1e1;"></div>
<div class="t" style="left:2238px;top:571.6px;font-size:15px;color:#474747;">1</div>
<div class="a" style="left:2228px;top:589px;width:295px;height:2px;background:#9a9a9a;"></div>
<div class="a" style="left:2520px;top:589px;width:4px;height:2px;background:#444;"></div>
<div class="t" style="left:1913px;top:602.2px;font-size:15px;color:#666;">Lines Skipped</div>
<div class="a" style="left:2222px;top:597px;width:309px;height:26px;background:#e1e1e1;"></div>
<div class="t" style="left:2238px;top:601.6px;font-size:15px;color:#474747;">0</div>
<svg style="left:2510px;top:601px;" width="12" height="18" viewBox="0 0 12 18"><path d="M2 6 L6 2 L10 6M2 12 L6 16 L10 12" fill="none" stroke="#555" stroke-width="1.7"/></svg>
<div class="t" style="left:1913px;top:632.2px;font-size:15px;color:#666;">Max Lines Visible</div>
<div class="a" style="left:2222px;top:627px;width:309px;height:26px;background:#e1e1e1;"></div>
<div class="t" style="left:2238px;top:631.6px;font-size:15px;color:#474747;">-1</div>
<svg style="left:2510px;top:631px;" width="12" height="18" viewBox="0 0 12 18"><path d="M2 6 L6 2 L10 6M2 12 L6 16 L10 12" fill="none" stroke="#555" stroke-width="1.7"/></svg>
<div class="a" style="left:1913px;top:653px;width:618px;height:22px;background:#cccccc;"></div>
<svg style="left:2187px;top:656px;" width="16" height="16" viewBox="0 0 16 16"><circle cx="8" cy="8" r="5" fill="none" stroke="#38a347" stroke-width="2"/></svg>
<div class="t" style="left:2207px;top:656.1px;font-size:15px;color:#474747;">Control</div>
<div class="a" style="left:1913px;top:675px;width:618px;height:22px;background:#dedede;"></div>
<svg style="left:1917.5px;top:681.5px;" width="7.0" height="9.0" viewBox="0 0 7.0 9.0"><path d="M2.1 1 L4.8999999999999995 4.5 L2.1 8.0" fill="none" stroke="#999" stroke-width="1.5"/></svg>
<div class="t" style="left:1932px;top:676.6px;font-size:15px;color:#474747;">Anchor</div>
<div class="a" style="left:1913px;top:697px;width:618px;height:22px;background:#dedede;"></div>
<svg style="left:1917.5px;top:703.5px;" width="7.0" height="9.0" viewBox="0 0 7.0 9.0"><path d="M2.1 1 L4.8999999999999995 4.5 L2.1 8.0" fill="none" stroke="#999" stroke-width="1.5"/></svg>
<div class="t" style="left:1932px;top:698.6px;font-size:15px;color:#474747;">Margin</div>
<div class="a" style="left:1913px;top:719px;width:618px;height:22px;background:#dedede;"></div>
<svg style="left:1917.5px;top:725.5px;" width="7.0" height="9.0" viewBox="0 0 7.0 9.0"><path d="M2.1 1 L4.8999999999999995 4.5 L2.1 8.0" fill="none" stroke="#999" stroke-width="1.5"/></svg>
<div class="t" style="left:1932px;top:720.6px;font-size:15px;color:#474747;">Grow Direction</div>
<div class="a" style="left:1913px;top:741px;width:618px;height:22px;background:#dedede;"></div>
<svg style="left:1917.5px;top:747.5px;" width="7.0" height="9.0" viewBox="0 0 7.0 9.0"><path d="M2.1 1 L4.8999999999999995 4.5 L2.1 8.0" fill="none" stroke="#999" stroke-width="1.5"/></svg>
<div class="t" style="left:1932px;top:742.6px;font-size:15px;color:#474747;">Rect</div>
<div class="a" style="left:1913px;top:763px;width:618px;height:22px;background:#dedede;"></div>
<svg style="left:1917.5px;top:769.5px;" width="7.0" height="9.0" viewBox="0 0 7.0 9.0"><path d="M2.1 1 L4.8999999999999995 4.5 L2.1 8.0" fill="none" stroke="#999" stroke-width="1.5"/></svg>
<div class="t" style="left:1932px;top:764.6px;font-size:15px;color:#474747;">Hint</div>
<div class="a" style="left:1913px;top:785px;width:618px;height:22px;background:#dedede;"></div>
<svg style="left:1917.5px;top:791.5px;" width="7.0" height="9.0" viewBox="0 0 7.0 9.0"><path d="M2.1 1 L4.8999999999999995 4.5 L2.1 8.0" fill="none" stroke="#999" stroke-width="1.5"/></svg>
<div class="t" style="left:1932px;top:786.6px;font-size:15px;color:#474747;">Focus</div>
<div class="a" style="left:1913px;top:807px;width:618px;height:22px;background:#dedede;"></div>
<svg style="left:1917.5px;top:813.5px;" width="7.0" height="9.0" viewBox="0 0 7.0 9.0"><path d="M2.1 1 L4.8999999999999995 4.5 L2.1 8.0" fill="none" stroke="#999" stroke-width="1.5"/></svg>
<div class="t" style="left:1932px;top:808.6px;font-size:15px;color:#474747;">Mouse</div>
<div class="a" style="left:1913px;top:829px;width:618px;height:22px;background:#dedede;"></div>
<svg style="left:1917.5px;top:835.5px;" width="7.0" height="9.0" viewBox="0 0 7.0 9.0"><path d="M2.1 1 L4.8999999999999995 4.5 L2.1 8.0" fill="none" stroke="#999" stroke-width="1.5"/></svg>
<div class="t" style="left:1932px;top:830.6px;font-size:15px;color:#474747;">Size Flags</div>
<div class="a" style="left:1913px;top:851px;width:618px;height:22px;background:#dedede;"></div>
<svg style="left:1917px;top:858px;" width="10" height="8" viewBox="0 0 10 8"><path d="M1 2.4 L5 5.6 L9 2.4" fill="none" stroke="#999" stroke-width="1.5"/></svg>
<div class="t" style="left:1932px;top:852.6px;font-size:15px;color:#474747;">Theme</div>
<div class="a" style="left:1913px;top:873px;width:309px;height:26px;background:#ebebeb;"></div>
<div class="a" style="left:2225px;top:873px;width:306px;height:26px;background:#e1e1e1;"></div>
<div class="t" style="left:1921px;top:877.6px;font-size:15px;color:#666;">Theme</div>
<svg style="left:2207px;top:878px;" width="16" height="16" viewBox="0 0 16 16"><path d="M4.2 4.8 A5.3 5.3 0 1 1 3.2 10" fill="none" stroke="#555" stroke-width="2"/><path d="M1.5 2.5 L6.8 3.2 L3.2 7.8Z" fill="#555"/></svg>
<svg style="left:2234px;top:878px;" width="12" height="16" viewBox="0 0 12 16"><defs><linearGradient id="rb" x1="0" y1="0" x2="0" y2="1"><stop offset="0" stop-color="#ff4040"/><stop offset="0.3" stop-color="#ffd040"/><stop offset="0.55" stop-color="#40d040"/><stop offset="0.8" stop-color="#40a0ff"/><stop offset="1" stop-color="#c040ff"/></linearGradient></defs><path d="M6 1 Q11 9 11 11 Q11 15 6 15 Q1 15 1 11 Q1 9 6 1Z" fill="url(#rb)"/></svg>
<div class="t" style="left:2349px;top:877.6px;font-size:15px;color:#474747;">Theme</div>
<svg style="left:2512px;top:882px;" width="10" height="8" viewBox="0 0 10 8"><path d="M1 2.4 L5 5.6 L9 2.4" fill="none" stroke="#555" stroke-width="1.5"/></svg>
<div class="a" style="left:1913px;top:899px;width:618px;height:22px;background:#dedede;"></div>
<svg style="left:1917.5px;top:905.5px;" width="7.0" height="9.0" viewBox="0 0 7.0 9.0"><path d="M2.1 1 L4.8999999999999995 4.5 L2.1 8.0" fill="none" stroke="#999" stroke-width="1.5"/></svg>
<div class="t" style="left:1932px;top:900.6px;font-size:15px;color:#474747;">Custom Styles</div>
<div class="a" style="left:1913px;top:921px;width:618px;height:22px;background:#dedede;"></div>
<svg style="left:1917px;top:928px;" width="10" height="8" viewBox="0 0 10 8"><path d="M1 2.4 L5 5.6 L9 2.4" fill="none" stroke="#999" stroke-width="1.5"/></svg>
<div class="t" style="left:1932px;top:922.6px;font-size:15px;color:#474747;">Custom Fonts</div>
<div class="a" style="left:1913px;top:943px;width:309px;height:68px;background:#ebebeb;"></div>
<div class="a" style="left:2225px;top:943px;width:306px;height:68px;background:#e1e1e1;"></div>
<div class="a" style="left:1922px;top:969px;width:14px;height:14px;background:#c9c9c9;border-radius:2px"></div>
<svg style="left:1922px;top:969px;" width="14" height="14" viewBox="0 0 14 14"><path d="M3 7.2 L6 10 L11.2 3.6" fill="none" stroke="#444" stroke-width="2"/></svg>
<div class="t" style="left:1941px;top:968.6px;font-size:15px;color:#666;">Font</div>
<svg style="left:2232px;top:966px;" width="16" height="16" viewBox="0 0 16 16"><path d="M1 1 H11 M6 1 V11" stroke="#3a8ef0" stroke-width="2.2"/><path d="M5 5 H15 M10 5 V15 M8 15 H12" stroke="#40e0e0" stroke-width="2.2"/></svg>
<div class="a" style="left:2344px;top:944px;width:61px;height:62px;background:#4a4a4a;border-radius:3px"></div>
<div class="t" style="left:2374.5px;top:963.2px;font-size:26px;color:#fff;font-weight:700;font-family:'Liberation Serif',serif;transform:translateX(-50%)">Abg</div>
<svg style="left:2512px;top:972px;" width="10" height="8" viewBox="0 0 10 8"><path d="M1 2.4 L5 5.6 L9 2.4" fill="none" stroke="#555" stroke-width="1.5"/></svg>
<div class="a" style="left:1921px;top:1011px;width:610px;height:326px;background:#dde1ea;border:1px solid #8fb0f0"></div>
<div class="a" style="left:1922px;top:1012px;width:608px;height:22px;background:#dedede;"></div>
<svg style="left:1927px;top:1019px;" width="10" height="8" viewBox="0 0 10 8"><path d="M1 2.4 L5 5.6 L9 2.4" fill="none" stroke="#999" stroke-width="1.5"/></svg>
<div class="t" style="left:1942px;top:1013.6px;font-size:15px;color:#474747;">Settings</div>
<div class="a" style="left:1922px;top:1034px;width:300px;height:25px;background:#dbe0ec;"></div>
<div class="a" style="left:2230px;top:1034px;width:298px;height:25px;background:#e1e1e1;"></div>
<div class="t" style="left:1931px;top:1037.1px;font-size:15px;color:#666;">Size</div>
<svg style="left:2211px;top:1038.5px;" width="16" height="16" viewBox="0 0 16 16"><path d="M4.2 4.8 A5.3 5.3 0 1 1 3.2 10" fill="none" stroke="#555" stroke-width="2"/><path d="M1.5 2.5 L6.8 3.2 L3.2 7.8Z" fill="#555"/></svg>
<div class="t" style="left:2246px;top:1038.6px;font-size:15px;color:#474747;">20</div>
<svg style="left:2509px;top:1037px;" width="12" height="18" viewBox="0 0 12 18"><path d="M2 6 L6 2 L10 6M2 12 L6 16 L10 12" fill="none" stroke="#555" stroke-width="1.7"/></svg>
<div class="a" style="left:1922px;top:1064px;width:300px;height:25px;background:#dbe0ec;"></div>
<div class="a" style="left:2230px;top:1064px;width:298px;height:25px;background:#e1e1e1;"></div>
<div class="t" style="left:1931px;top:1067.1px;font-size:15px;color:#666;">Outline Size</div>
<svg style="left:2211px;top:1068.5px;" width="16" height="16" viewBox="0 0 16 16"><path d="M4.2 4.8 A5.3 5.3 0 1 1 3.2 10" fill="none" stroke="#555" stroke-width="2"/><path d="M1.5 2.5 L6.8 3.2 L3.2 7.8Z" fill="#555"/></svg>
<div class="t" style="left:2246px;top:1068.6px;font-size:15px;color:#474747;">1</div>
<svg style="left:2509px;top:1067px;" width="12" height="18" viewBox="0 0 12 18"><path d="M2 6 L6 2 L10 6M2 12 L6 16 L10 12" fill="none" stroke="#555" stroke-width="1.7"/></svg>
<div class="a" style="left:1922px;top:1094px;width:300px;height:25px;background:#dbe0ec;"></div>
<div class="a" style="left:2230px;top:1094px;width:298px;height:25px;background:#e1e1e1;"></div>
<div class="t" style="left:1931px;top:1097.1px;font-size:15px;color:#666;">Outline Color</div>
<svg style="left:2211px;top:1098.5px;" width="16" height="16" viewBox="0 0 16 16"><path d="M4.2 4.8 A5.3 5.3 0 1 1 3.2 10" fill="none" stroke="#555" stroke-width="2"/><path d="M1.5 2.5 L6.8 3.2 L3.2 7.8Z" fill="#555"/></svg>
<svg style="left:2236px;top:1097px;" width="287" height="18" viewBox="0 0 287 18"><defs><pattern id="ck" width="18" height="18" patternUnits="userSpaceOnUse"><rect width="18" height="18" fill="#3f3f3f"/><rect width="9" height="9" fill="#494949"/><rect x="9" y="9" width="9" height="9" fill="#494949"/></pattern></defs><rect width="287" height="18" fill="url(#ck)"/></svg>
<div class="a" style="left:1922px;top:1124px;width:300px;height:25px;background:#dbe0ec;"></div>
<div class="a" style="left:2230px;top:1124px;width:298px;height:25px;background:#e1e1e1;"></div>
<div class="t" style="left:1931px;top:1127.1px;font-size:15px;color:#666;">Use Mipmaps</div>
<div class="a" style="left:2235px;top:1129px;width:14px;height:14px;background:#c9c9c9;border-radius:2px"></div>
<div class="t" style="left:2254px;top:1128.6px;font-size:15px;color:#474747;">On</div>
<div class="a" style="left:1922px;top:1154px;width:300px;height:25px;background:#dbe0ec;"></div>
<div class="a" style="left:2230px;top:1154px;width:298px;height:25px;background:#e1e1e1;"></div>
<div class="t" style="left:1931px;top:1157.1px;font-size:15px;color:#666;">Use Filter</div>
<svg style="left:2211px;top:1158.5px;" width="16" height="16" viewBox="0 0 16 16"><path d="M4.2 4.8 A5.3 5.3 0 1 1 3.2 10" fill="none" stroke="#555" stroke-width="2"/><path d="M1.5 2.5 L6.8 3.2 L3.2 7.8Z" fill="#555"/></svg>
<div class="a" style="left:2235px;top:1159px;width:14px;height:14px;background:#c9c9c9;border-radius:2px"></div>
<svg style="left:2235px;top:1159px;" width="14" height="14" viewBox="0 0 14 14"><path d="M3 7.2 L6 10 L11.2 3.6" fill="none" stroke="#444" stroke-width="2"/></svg>
<div class="t" style="left:2254px;top:1158.6px;font-size:15px;color:#3f86ea;">On</div>
<div class="a" style="left:1922px;top:1180px;width:608px;height:22px;background:#dedede;"></div>
<svg style="left:1927.5px;top:1186.5px;" width="7.0" height="9.0" viewBox="0 0 7.0 9.0"><path d="M2.1 1 L4.8999999999999995 4.5 L2.1 8.0" fill="none" stroke="#999" stroke-width="1.5"/></svg>
<div class="t" style="left:1942px;top:1181.6px;font-size:15px;color:#474747;">Extra Spacing</div>
<div class="a" style="left:1922px;top:1202px;width:608px;height:22px;background:#dedede;"></div>
<svg style="left:1927px;top:1209px;" width="10" height="8" viewBox="0 0 10 8"><path d="M1 2.4 L5 5.6 L9 2.4" fill="none" stroke="#999" stroke-width="1.5"/></svg>
<div class="t" style="left:1942px;top:1203.6px;font-size:15px;color:#474747;">Font</div>
<div class="a" style="left:1922px;top:1224px;width:300px;height:67px;background:#dbe0ec;"></div>
<div class="a" style="left:2230px;top:1224px;width:298px;height:67px;background:#e1e1e1;"></div>
<div class="t" style="left:1931px;top:1246.6px;font-size:15px;color:#666;">Font Data</div>
<svg style="left:2211px;top:1247px;" width="16" height="16" viewBox="0 0 16 16"><path d="M4.2 4.8 A5.3 5.3 0 1 1 3.2 10" fill="none" stroke="#555" stroke-width="2"/><path d="M1.5 2.5 L6.8 3.2 L3.2 7.8Z" fill="#555"/></svg>
<svg style="left:2236px;top:1246px;" width="18" height="18" viewBox="0 0 18 18"><path d="M1 1 H10 M5.5 1 V12" stroke="#555" stroke-width="1.6" stroke-dasharray="1.5 1"/><path d="M5 5 H14 M9.5 5 V16 M7 16 H12" stroke="#f03030" stroke-width="2.2"/></svg>
<div class="a" style="left:2345px;top:1224px;width:62px;height:62px;background:#4a4a4a;border-radius:3px"></div>
<div class="t" style="left:2376px;top:1243.2px;font-size:26px;color:#fff;font-weight:700;font-family:'Liberation Serif',serif;transform:translateX(-50%)">Abg</div>
<svg style="left:2511px;top:1252px;" width="10" height="8" viewBox="0 0 10 8"><path d="M1 2.4 L5 5.6 L9 2.4" fill="none" stroke="#555" stroke-width="1.5"/></svg>
<div class="a" style="left:1930px;top:1292px;width:598px;height:21px;background:#dfe1e6;"></div>
<svg style="left:1935.5px;top:1298.5px;" width="7.0" height="9.0" viewBox="0 0 7.0 9.0"><path d="M2.1 1 L4.8999999999999995 4.5 L2.1 8.0" fill="none" stroke="#999" stroke-width="1.5"/></svg>
<div class="t" style="left:1950px;top:1293.6px;font-size:15px;color:#474747;">Fallback</div>
<div class="a" style="left:1922px;top:1314px;width:608px;height:22px;background:#dedede;"></div>
<svg style="left:1927.5px;top:1320.5px;" width="7.0" height="9.0" viewBox="0 0 7.0 9.0"><path d="M2.1 1 L4.8999999999999995 4.5 L2.1 8.0" fill="none" stroke="#999" stroke-width="1.5"/></svg>
<div class="t" style="left:1942px;top:1315.6px;font-size:15px;color:#474747;">Resource</div>
<div class="a" style="left:1913px;top:1338px;width:618px;height:22px;background:#dedede;"></div>
<svg style="left:1917.5px;top:1344.5px;" width="7.0" height="9.0" viewBox="0 0 7.0 9.0"><path d="M2.1 1 L4.8999999999999995 4.5 L2.1 8.0" fill="none" stroke="#999" stroke-width="1.5"/></svg>
<div class="t" style="left:1932px;top:1339.6px;font-size:15px;color:#474747;">Custom Colors</div>
<div class="a" style="left:1913px;top:1360px;width:618px;height:22px;background:#dedede;"></div>
<svg style="left:1917.5px;top:1366.5px;" width="7.0" height="9.0" viewBox="0 0 7.0 9.0"><path d="M2.1 1 L4.8999999999999995 4.5 L2.1 8.0" fill="none" stroke="#999" stroke-width="1.5"/></svg>
<div class="t" style="left:1932px;top:1361.6px;font-size:15px;color:#474747;">Custom Constants</div>
<div class="a" style="left:1909px;top:1378px;width:642px;height:4px;background:#ffffff;"></div>
<!--GAME-->
<div class="a" style="left:768px;top:391px;width:1024px;height:629px;box-shadow:0 6px 28px 6px rgba(0,0,0,0.45);border-radius:7px 7px 0 0"></div>
<div class="a" style="left:768px;top:391px;width:1024px;height:29px;background:linear-gradient(#56534c,#45433e 60%,#3d3c38);border-radius:7px 7px 0 0"></div>
<div class="t" style="left:1280px;top:397.6px;font-size:16.2px;color:#dfdbd2;font-weight:700;transform:translateX(-50%);">Farm Life</div>
<svg style="left:1729px;top:397px;" width="16" height="16" viewBox="0 0 16 16"><circle cx="8" cy="8" r="7.5" fill="#5f5c56" stroke="#3e3c38" stroke-width="1"/></svg>
<svg style="left:1749px;top:397px;" width="16" height="16" viewBox="0 0 16 16"><circle cx="8" cy="8" r="7.5" fill="#5f5c56" stroke="#3e3c38" stroke-width="1"/></svg>
<svg style="left:1732px;top:404px;" width="10" height="2" viewBox="0 0 10 2"><rect width="10" height="1.6" fill="#3a3935"/></svg>
<svg style="left:1753px;top:401px;" width="9" height="9" viewBox="0 0 9 9"><rect x="0.6" y="0.6" width="7.8" height="7.8" fill="none" stroke="#3a3935" stroke-width="1.2"/></svg>
<svg style="left:1770px;top:397px;" width="16" height="16" viewBox="0 0 16 16"><defs><linearGradient id="cl" x1="0" y1="0" x2="0" y2="1"><stop offset="0" stop-color="#f47b4c"/><stop offset="1" stop-color="#df4a16"/></linearGradient></defs><circle cx="8" cy="8" r="7.5" fill="url(#cl)" stroke="#8a3414" stroke-width="0.8"/><path d="M5 5 L11 11 M11 5 L5 11" stroke="#4a1a0a" stroke-width="1.4"/></svg>
<svg style="left:768px;top:420px" width="1024" height="600" viewBox="0 0 2458 1440" preserveAspectRatio="none"><defs>
<linearGradient id="gnd" x1="0" y1="0" x2="0.25" y2="1">
<stop offset="0" stop-color="#69cc9f"/><stop offset="0.15" stop-color="#6cd3a6"/><stop offset="0.38" stop-color="#60c893"/><stop offset="0.62" stop-color="#52bd80"/><stop offset="1" stop-color="#4eb87a"/></linearGradient>
<linearGradient id="hf" x1="0" y1="0" x2="1" y2="1"><stop offset="0" stop-color="#5cb46a"/><stop offset="1" stop-color="#4ea858"/></linearGradient>
<linearGradient id="hs" x1="0" y1="0" x2="1" y2="0"><stop offset="0" stop-color="#6bc68a"/><stop offset="1" stop-color="#5ab872"/></linearGradient>
<filter id="bl" x="-20%" y="-50%" width="140%" height="200%"><feGaussianBlur stdDeviation="6"/></filter>
</defs><rect width="2458" height="1440" fill="#ecd1c2"/><polygon points="0,226 1005,206 2458,190 2458,1440 0,1440" fill="url(#gnd)" /><polygon points="1190,214 2458,188 2458,620 1300,300" fill="#6bd3a5" /><ellipse cx="490" cy="282" rx="235" ry="20" fill="#4a8880" filter="url(#bl)" opacity="0.95"/><polygon points="44.8,0 199.5,0 242,40 231.5,26 194,12 167.5,27 156.8,64 183.5,144 231.5,197 279.5,245 343.5,264 236.8,280 167.5,285 82,277 124.8,224 135.5,197 114,144 87.5,64" fill="#2a2839" /><polygon points="199.5,0 242,40 231.5,26 194,12" fill="#18141a" /><polygon points="60,0 120,0 140,50 110,40" fill="#3f4262" /><polygon points="150,70 180,140 200,190 165,150" fill="#3a3a56" /><polygon points="82,282 120,245 160,250 150,286" fill="#5f5b70" /><polygon points="160,250 250,228 345,262 240,276" fill="#3c3a52" /><polygon points="1065,178 1575,172 1575,218 1300,222 1190,222" fill="#1a5035" /><polygon points="1005,178 1065,177 1190,216 1110,225" fill="#b4ee94" /><polygon points="1005,180 1110,223 1112,310 1007,226" fill="url(#hs)" /><polygon points="1110,223 1190,215 1190,300 1140,300 1138,312 1112,310" fill="#1a5035" /><polygon points="1140,230 1260,228 1360,262 1230,268" fill="#b4ee94" /><polygon points="1140,232 1230,268 1232,405 1145,335" fill="url(#hs)" /><polygon points="1230,268 1360,262 1360,292 1310,296 1305,400 1232,405" fill="#1a5035" /><polygon points="1578,152 2458,160 2458,322 2030,348 1790,300" fill="#735a4c" /><polygon points="1578,152 1822,157 1790,298 1565,262" fill="#ecb57d" /><polygon points="1823,238 1950,236 1927,322 1793,301" fill="#5d6587" /><polygon points="1832,205 1850,205 1815,290 1798,290" fill="#15182a" /><polygon points="1935,200 1955,200 1925,290 1905,290" fill="#23232b" /><polygon points="1838,230 1940,222 1938,240 1836,248" fill="#4a2f3d" /><polygon points="1828,262 1930,255 1928,272 1824,280" fill="#4a2f3d" /><polygon points="1955,168 2085,170 2030,348 1920,322" fill="#ecb57d" /><polygon points="1822,155 2458,165 2458,172 1822,160" fill="#e9b27c" /><polygon points="2030,348 2458,322 2458,335 2100,352" fill="#4f8f86" /><polygon points="1305,295 1470,290 2458,565 2458,745 1300,300" fill="#b6ee90" /><polygon points="1300,300 2458,745 2458,1365 1300,460" fill="url(#hf)" /><g filter="url(#bl)" opacity="0.92"><polygon points="1192.8,1047.0 1290.8,1043.5 1430.8,1050.5 1535.8,1047.0 1605.8,1040.0 1654.8,1061.0 1668.8,1103.0 1623.3,1117.0 1553.3,1103.0 1465.8,1085.5 1325.8,1078.5 1220.8,1064.5" fill="#227050" /><polygon points="1255.8,837.0 1353.8,844.0 1360.8,952.5 1273.3,959.5 1248.8,921.0" fill="#237150" /></g><polygon points="1203.3,802.0 1248.8,812.5 1262.8,830.0 1273.3,942.0 1245.3,949.0 1217.3,945.5 1206.8,893.0" fill="#dfe863" /><polygon points="1217.3,812.5 1231.3,814.2 1241.8,945.5 1227.8,947.3" fill="#eef080" /><polygon points="1206.8,823.0 1262.8,830.0 1261.1,838.8 1208.5,833.5" fill="#a9ad8e" /><polygon points="1208.5,833.5 1261.1,838.8 1260.4,841.2 1208.9,836.3" fill="#3a3a30" /><polygon points="1135.1,873.7 1170.0,873.7 1168.3,1057.5 1150.8,1057.5 1142.1,984.0" fill="#1f2b74" /><polygon points="1185.8,873.7 1217.3,873.7 1212.0,1057.5 1192.8,1057.5 1191.0,984.0" fill="#1f2b74" /><polygon points="1143.8,980.5 1168.3,980.5 1168.3,998.0 1145.5,998.0" fill="#2f3f9a" /><polygon points="1191.0,980.5 1213.8,980.5 1213.1,998.0 1192.1,998.0" fill="#2f3f9a" /><polygon points="1150.8,1054.0 1170.0,1054.0 1170.0,1060.3 1150.8,1060.3" fill="#3a1a2a" /><polygon points="1192.8,1054.0 1212.0,1054.0 1212.0,1060.3 1192.8,1060.3" fill="#3a1a2a" /><polygon points="1140.3,821.3 1213.8,821.3 1217.3,873.7 1135.1,873.7" fill="#2e3e98" /><polygon points="1138.6,844.0 1213.8,844.0 1215.6,872.0 1136.8,872.0" fill="#2a3a90" /><polygon points="1105.3,763.5 1045.8,802.0 986.3,847.5 993.3,858.0 1052.8,830.0 1112.3,809.0" fill="#e9cf9e" /><polygon points="986.3,847.5 1045.8,823.0 1112.3,807.3 1108.8,812.5 1052.8,837.0 993.3,858.0" fill="#b3795e" /><polygon points="1238.3,763.5 1301.3,809.0 1364.3,844.0 1357.3,858.0 1290.8,823.0 1234.8,802.0" fill="#a26f62" /><polygon points="1105.3,753.0 1126.3,749.5 1220.8,749.5 1238.3,760.0 1238.3,781.0 1105.3,781.0" fill="#cf4c5e" /><polygon points="1105.3,781.0 1238.3,781.0 1234.8,807.3 1203.3,809.0 1203.3,821.3 1143.8,821.3 1143.8,809.0 1112.3,807.3" fill="#6c2131" /><polygon points="1154.3,753.0 1164.8,753.0 1164.8,821.3 1154.3,821.3" fill="#4a66d2" /><polygon points="1185.8,753.0 1194.6,753.0 1194.6,821.3 1185.8,821.3" fill="#3f58c0" /><polygon points="1140.3,704.0 1199.8,700.5 1199.8,746.0 1178.8,753.0 1150.8,749.5 1140.3,735.5" fill="#8d5b47" /><polygon points="1140.3,704.0 1185.8,690.0 1199.8,700.5 1185.8,718.0 1150.8,718.0" fill="#d99b7f" /><polygon points="1094.8,693.5 1115.8,672.5 1171.8,665.5 1227.8,674.3 1245.3,697.0 1227.8,718.0 1171.8,726.7 1108.8,719.8" fill="#ece43a" /><polygon points="1185.8,672.5 1206.8,686.5 1199.8,704.0 1185.8,690.0" fill="#c9b82a" /><polygon points="1138.6,704.0 1168.3,693.5 1182.3,718.0 1150.8,718.0" fill="#dba07f" /></svg>
<div class="t" style="top:447.3px;font-size:17px;font-family:'Liberation Serif',serif;font-weight:700;color:#fafafa;-webkit-text-stroke:2.4px #4a4a4a;paint-order:stroke fill;transform:scaleY(1.31);transform-origin:left 14.2px;letter-spacing:0.68px;left:776px;">POO: 0 FAMILYHEALTH: 69/100 RESERVE: 0</div>
<div class="t" style="top:447.3px;font-size:17px;font-family:'Liberation Serif',serif;font-weight:700;color:#fafafa;-webkit-text-stroke:2.4px #4a4a4a;paint-order:stroke fill;transform:scaleY(1.31);transform-origin:right 14.2px;letter-spacing:1.3px;right:790.7px;">ARROW keys or WASD to move</div>
<div class="t" style="top:476.3px;font-size:17px;font-family:'Liberation Serif',serif;font-weight:700;color:#fafafa;-webkit-text-stroke:2.4px #4a4a4a;paint-order:stroke fill;transform:scaleY(1.31);transform-origin:right 14.2px;letter-spacing:1.22px;right:790.8px;">ACTION is LMB or E</div>
<div class="t" style="top:505.8px;font-size:17px;font-family:'Liberation Serif',serif;font-weight:700;color:#fafafa;-webkit-text-stroke:2.4px #4a4a4a;paint-order:stroke fill;transform:scaleY(1.31);transform-origin:right 14.2px;letter-spacing:1.49px;right:790.5px;">DROP is RMB or Q</div>
<div class="t" style="top:432.4px;font-size:27px;font-family:'Liberation Serif',serif;font-weight:700;color:#fafafa;-webkit-text-stroke:2.8px #4a4a4a;paint-order:stroke fill;transform:scaleY(1.32);transform-origin:left 22.6px;letter-spacing:0.8px;left:1662px;">BARN</div>
<div class="t" style="top:708.6px;font-size:22px;font-family:'Liberation Serif',serif;font-weight:700;color:#fafafa;-webkit-text-stroke:2.6px #4a4a4a;paint-order:stroke fill;transform:scaleY(1.27);transform-origin:left 18.4px;letter-spacing:2.0px;left:1256px;">Feed the cows!</div>
<div class="t" style="top:785.0px;font-size:12px;font-family:'Liberation Serif',serif;font-weight:700;color:#fafafa;-webkit-text-stroke:1.6px #4a4a4a;paint-order:stroke fill;transform:scaleY(1.3);transform-origin:left 10.1px;letter-spacing:0.9px;left:1276px;">GRAS</div>
<div class="a" style="left:0px;top:1391px;width:2560px;height:49px;background:#3d3c38;"></div>
<div class="t" style="left:545px;top:1403.5px;font-size:21px;color:#5b5a55;transform:scaleX(0.76);transform-origin:left top">RGB Alpha 8-bit interlaced /channel) RGBA elle-Vergrößerung.ico</div>
<div class="a" style="left:18px;top:1394px;width:30px;height:30px;background:transparent;border:1px solid #5a5955"></div>
<svg style="left:9px;top:1399px;" width="32" height="32" viewBox="0 0 32 32"><rect x="3" y="6" width="26" height="12" rx="2" fill="#c8c8c8"/><rect x="4" y="8" width="24" height="6" fill="#9a9a9a"/><path d="M14 18 L18 18 L19 29 L13 29Z" fill="#d8b070"/><path d="M8 22 Q16 16 24 22 Q16 26 8 22Z" fill="#d22a2a"/></svg>
<svg style="left:59px;top:1399px;" width="32" height="32" viewBox="0 0 32 32"><rect x="4" y="2" width="24" height="28" rx="2" fill="#d0d0d0"/><rect x="6" y="5" width="20" height="9" fill="#e07a3a"/><rect x="6" y="6" width="20" height="3" fill="#f4d0b0"/><rect x="6" y="16" width="20" height="12" fill="#bcbcbc"/><rect x="12" y="20" width="8" height="4" rx="1" fill="none" stroke="#555" stroke-width="1.5"/></svg>
<svg style="left:68.5px;top:1434.5px;" width="5" height="5" viewBox="0 0 5 5"><circle cx="2.5" cy="2.5" r="2" fill="#e9541f"/></svg>
<svg style="left:76.5px;top:1434.5px;" width="5" height="5" viewBox="0 0 5 5"><circle cx="2.5" cy="2.5" r="2" fill="#e9541f"/></svg>
<svg style="left:109px;top:1399px;" width="32" height="32" viewBox="0 0 32 32"><path d="M2 9 Q2 6 5 6 H13 L15 9 H28 Q30 9 30 11 V28 H2Z" fill="#e7e0d8"/><path d="M2 12 H30 V28 Q30 30 28 30 H4 Q2 30 2 28Z" fill="#e8662a"/></svg>
<svg style="left:122.5px;top:1434.5px;" width="5" height="5" viewBox="0 0 5 5"><circle cx="2.5" cy="2.5" r="2" fill="#e9541f"/></svg>
<svg style="left:159px;top:1399px;" width="32" height="32" viewBox="0 0 32 32"><path d="M5 10 H27 L28 30 H4Z" fill="#e8662a"/><path d="M11 10 Q11 3 16 3 Q21 3 21 10" fill="none" stroke="#e8662a" stroke-width="2.5"/><path d="M11 27 L16 14 L21 27 M12.5 23 H19.5" fill="none" stroke="#fff" stroke-width="2.2"/></svg>
<svg style="left:209px;top:1399px;" width="32" height="32" viewBox="0 0 32 32"><rect x="2" y="5" width="28" height="23" fill="#dcdcdc"/><rect x="4" y="7" width="24" height="19" fill="#1c1c1c"/><path d="M7 11 L11 14 L7 17 M12 18 H17" fill="none" stroke="#fff" stroke-width="1.5"/></svg>
<svg style="left:218.5px;top:1434.5px;" width="5" height="5" viewBox="0 0 5 5"><circle cx="2.5" cy="2.5" r="2" fill="#e9541f"/></svg>
<svg style="left:226.5px;top:1434.5px;" width="5" height="5" viewBox="0 0 5 5"><circle cx="2.5" cy="2.5" r="2" fill="#e9541f"/></svg>
<svg style="left:259px;top:1399px;" width="32" height="32" viewBox="0 0 32 32"><rect x="6" y="1" width="20" height="30" rx="5" fill="#e4e4e0"/><circle cx="16" cy="13" r="7" fill="#333"/><circle cx="16" cy="13" r="5" fill="#d7b32a"/><circle cx="16" cy="13" r="2" fill="#333"/><circle cx="16" cy="25" r="3" fill="#ccc"/></svg>
<svg style="left:309px;top:1399px;" width="32" height="32" viewBox="0 0 32 32"><circle cx="16" cy="16" r="14.5" fill="#4a86e8"/><circle cx="16" cy="16" r="7" fill="#fff"/><circle cx="16" cy="16" r="5.5" fill="#6aa0f0"/></svg>
<svg style="left:322.5px;top:1434.5px;" width="5" height="5" viewBox="0 0 5 5"><circle cx="2.5" cy="2.5" r="2" fill="#e9541f"/></svg>
<svg style="left:359px;top:1399px;" width="32" height="32" viewBox="0 0 32 32"><path d="M23 2 L30 6 V26 L23 30 L9 18 L4 22 L1 20 V12 L4 10 L9 14Z" fill="#1f8ad8"/><path d="M23 8 L13 16 L23 24Z" fill="#3d3c38"/></svg>
<svg style="left:372.5px;top:1434.5px;" width="5" height="5" viewBox="0 0 5 5"><circle cx="2.5" cy="2.5" r="2" fill="#e9541f"/></svg>
<svg style="left:409px;top:1399px;" width="32" height="32" viewBox="0 0 32 32"><circle cx="16" cy="16" r="14.5" fill="#17191f" stroke="#3a3d45" stroke-width="1"/><path d="M10 14 Q10 7 16 7 Q22 7 22 14 V19 Q22 22 19 22 V26 H13 V22 Q10 22 10 19Z" fill="#2bb5a8"/></svg>
<svg style="left:422.5px;top:1434.5px;" width="5" height="5" viewBox="0 0 5 5"><circle cx="2.5" cy="2.5" r="2" fill="#e9541f"/></svg>
<svg style="left:459px;top:1399px;" width="32" height="32" viewBox="0 0 32 32"><circle cx="16" cy="16" r="14.5" fill="#4a8cd4"/><text x="16" y="24" text-anchor="middle" font-size="22" font-weight="700" fill="#fff" font-family="Liberation Sans">?</text></svg>
<svg style="left:509px;top:1399px;" width="32" height="32" viewBox="0 0 32 32"><circle cx="16" cy="17" r="14" fill="#f36f20"/><path d="M6 8 Q14 2 24 5 Q30 10 30 17 Q26 8 18 10Z" fill="#ffc530"/><circle cx="15" cy="17" r="7" fill="#7a3fc8"/><path d="M3 14 Q6 24 15 24 Q10 22 9 16Z" fill="#e0267c"/></svg>
<svg style="left:559px;top:1399px;" width="32" height="32" viewBox="0 0 32 32"><circle cx="16" cy="16" r="14.5" fill="#fff"/><rect x="9" y="13" width="6" height="2.6" rx="1.3" fill="#36c5f0"/><rect x="15" y="8" width="2.6" height="7" rx="1.3" fill="#2eb67d"/><rect x="17" y="16.5" width="6" height="2.6" rx="1.3" fill="#ecb22e"/><rect x="14" y="17" width="2.6" height="7" rx="1.3" fill="#e01e5a"/></svg>
<svg style="left:609px;top:1399px;" width="32" height="32" viewBox="0 0 32 32"><circle cx="16" cy="16" r="15" fill="#fff"/><path d="M16 4 Q23 12 16 28 Q9 12 16 4Z" fill="#13aa52"/></svg>
<svg style="left:659px;top:1399px;" width="32" height="32" viewBox="0 0 32 32"><path d="M7 3 H25 L30 9 L27 22 L16 30 L5 22 L2 9Z" fill="#fb542b"/><path d="M10 10 H22 L24 14 L19 22 H13 L8 14Z" fill="#fff"/><path d="M13 14 L15 16 M19 14 L17 16" stroke="#fb542b" stroke-width="1.5"/></svg>
<svg style="left:709px;top:1399px;" width="32" height="32" viewBox="0 0 32 32"><rect x="4" y="5" width="22" height="24" fill="#f2f2f2" stroke="#bbb" stroke-width="1"/><path d="M7 12H22M7 16H22M7 20H22M7 24H18" stroke="#999" stroke-width="1"/><path d="M4 5H26" stroke="#666" stroke-width="2" stroke-dasharray="1.5 1"/><path d="M14 26 L27 9 L30 11 L17 28Z" fill="#e8872a"/></svg>
<svg style="left:759px;top:1399px;" width="32" height="32" viewBox="0 0 32 32"><path d="M3 20 L15 11 L10 8 L21 7 Q31 10 29 19 Q27 27 19 26 Q11 25 12 18 L5 23Z" fill="#ea7600"/><circle cx="20" cy="17.5" r="5.5" fill="#fff"/><circle cx="20" cy="17.5" r="3.5" fill="#265787"/></svg>
<svg style="left:768.5px;top:1434.5px;" width="5" height="5" viewBox="0 0 5 5"><circle cx="2.5" cy="2.5" r="2" fill="#e9541f"/></svg>
<svg style="left:776.5px;top:1434.5px;" width="5" height="5" viewBox="0 0 5 5"><circle cx="2.5" cy="2.5" r="2" fill="#e9541f"/></svg>
<svg style="left:809px;top:1399px;" width="32" height="32" viewBox="0 0 32 32"><path d="M3 12 L6 6 L10 8 L13 4 H19 L22 8 L26 6 L29 12 L29 24 Q26 28 22 26 L19 29 H13 L10 26 Q6 28 3 24Z" fill="#478cbf"/><circle cx="11" cy="16" r="3.3" fill="#fff"/><circle cx="21" cy="16" r="3.3" fill="#fff"/><circle cx="11" cy="16" r="1.6" fill="#414042"/><circle cx="21" cy="16" r="1.6" fill="#414042"/></svg>
<svg style="left:822.5px;top:1434.5px;" width="5" height="5" viewBox="0 0 5 5"><circle cx="2.5" cy="2.5" r="2" fill="#e9541f"/></svg>
<svg style="left:859px;top:1399px;" width="32" height="32" viewBox="0 0 32 32"><path d="M13 2 H19 L25 25 H7Z" fill="#f28a0f"/><path d="M11 10 H21 L22.5 16 H9.5Z M8.5 20 H23.5 L24.5 24 H7.5Z" fill="#e8e8e8"/><rect x="3" y="25" width="26" height="5" rx="1" fill="#f28a0f"/></svg>
<svg style="left:872.5px;top:1434.5px;" width="5" height="5" viewBox="0 0 5 5"><circle cx="2.5" cy="2.5" r="2" fill="#e9541f"/></svg>
<svg style="left:909px;top:1399px;" width="32" height="32" viewBox="0 0 32 32"><rect x="2" y="2" width="28" height="28" fill="#bf0000" stroke="#8a0000" stroke-dasharray="1.5 1.5"/><text x="15" y="25" text-anchor="middle" font-size="22" font-weight="700" font-style="italic" fill="#fff" font-family="Liberation Sans">Fz</text></svg>
<svg style="left:922.5px;top:1434.5px;" width="5" height="5" viewBox="0 0 5 5"><circle cx="2.5" cy="2.5" r="2" fill="#e9541f"/></svg>
<svg style="left:959px;top:1399px;" width="32" height="32" viewBox="0 0 32 32"><defs><linearGradient id="kr" x1="0" y1="0" x2="1" y2="1"><stop offset="0" stop-color="#ff6ad5"/><stop offset="0.5" stop-color="#6ad0ff"/><stop offset="1" stop-color="#f8f060"/></linearGradient></defs><circle cx="16" cy="17" r="13" fill="url(#kr)"/><path d="M3 4 L20 19 L23 23 L19 21Z" fill="#333"/></svg>
<svg style="left:972.5px;top:1434.5px;" width="5" height="5" viewBox="0 0 5 5"><circle cx="2.5" cy="2.5" r="2" fill="#e9541f"/></svg>
<div class="a" style="left:1002px;top:1393px;width:46px;height:46px;background:#55544f;border-radius:3px"></div>
<svg style="left:1009px;top:1399px;" width="32" height="32" viewBox="0 0 32 32"><rect x="1" y="1" width="30" height="30" rx="3" fill="#2e4f70"/><path d="M4 12 L7 7 L10 9 L13 5 H19 L22 9 L25 7 L28 12 V23 Q25 27 22 25 L19 28 H13 L10 25 Q7 27 4 23Z" fill="#478cbf"/><circle cx="11" cy="16" r="3" fill="#fff"/><circle cx="21" cy="16" r="3" fill="#fff"/><circle cx="11" cy="16" r="1.5" fill="#414042"/><circle cx="21" cy="16" r="1.5" fill="#414042"/></svg>
<svg style="left:1022.5px;top:1434.5px;" width="5" height="5" viewBox="0 0 5 5"><circle cx="2.5" cy="2.5" r="2" fill="#e9541f"/></svg>
<div class="a" style="left:1687px;top:1392px;width:234px;height:40px;background:transparent;border:1px solid #4a4944;border-radius:4px"></div>
<div class="t" style="left:1720px;top:1402.1px;font-size:18px;color:#5d5c57;">640 x 512 (12,4 MiB)</div>
<div class="t" style="left:2267px;top:1402.9px;font-size:17px;color:#5d5c57;">50%</div>
<svg style="left:2311px;top:1404px;" width="14" height="10" viewBox="0 0 14 10"><path d="M1 2 L7 8 L13 2" fill="none" stroke="#5d5c57" stroke-width="1.6"/></svg>
<div class="a" style="left:2338px;top:1403px;width:160px;height:14px;background:#45443f;border-radius:7px"></div>
<div class="a" style="left:2338px;top:1403px;width:30px;height:14px;background:#3d4a4c;border-radius:7px"></div>
<svg style="left:2359px;top:1393px;" width="34" height="34" viewBox="0 0 34 34"><circle cx="17" cy="17" r="16" fill="#3b3a36" stroke="#4f4e49" stroke-width="1.5"/></svg>
<div class="a" style="left:2517px;top:1400px;width:24px;height:28px;background:#5b5a55;border-radius:2px"></div>
<svg style="left:2524px;top:1404px;" width="5" height="5" viewBox="0 0 5 5"><circle cx="2.5" cy="2.5" r="2.2" fill="#fff"/></svg>
<svg style="left:2532px;top:1404px;" width="5" height="5" viewBox="0 0 5 5"><circle cx="2.5" cy="2.5" r="2.2" fill="#fff"/></svg>
<svg style="left:2540px;top:1404px;" width="5" height="5" viewBox="0 0 5 5"><circle cx="2.5" cy="2.5" r="2.2" fill="#fff"/></svg>
<svg style="left:2524px;top:1412px;" width="5" height="5" viewBox="0 0 5 5"><circle cx="2.5" cy="2.5" r="2.2" fill="#fff"/></svg>
<svg style="left:2532px;top:1412px;" width="5" height="5" viewBox="0 0 5 5"><circle cx="2.5" cy="2.5" r="2.2" fill="#fff"/></svg>
<svg style="left:2540px;top:1412px;" width="5" height="5" viewBox="0 0 5 5"><circle cx="2.5" cy="2.5" r="2.2" fill="#fff"/></svg>
<svg style="left:2524px;top:1420px;" width="5" height="5" viewBox="0 0 5 5"><circle cx="2.5" cy="2.5" r="2.2" fill="#fff"/></svg>
<svg style="left:2532px;top:1420px;" width="5" height="5" viewBox="0 0 5 5"><circle cx="2.5" cy="2.5" r="2.2" fill="#fff"/></svg>
<svg style="left:2540px;top:1420px;" width="5" height="5" viewBox="0 0 5 5"><circle cx="2.5" cy="2.5" r="2.2" fill="#fff"/></svg>
</div></body></html>
